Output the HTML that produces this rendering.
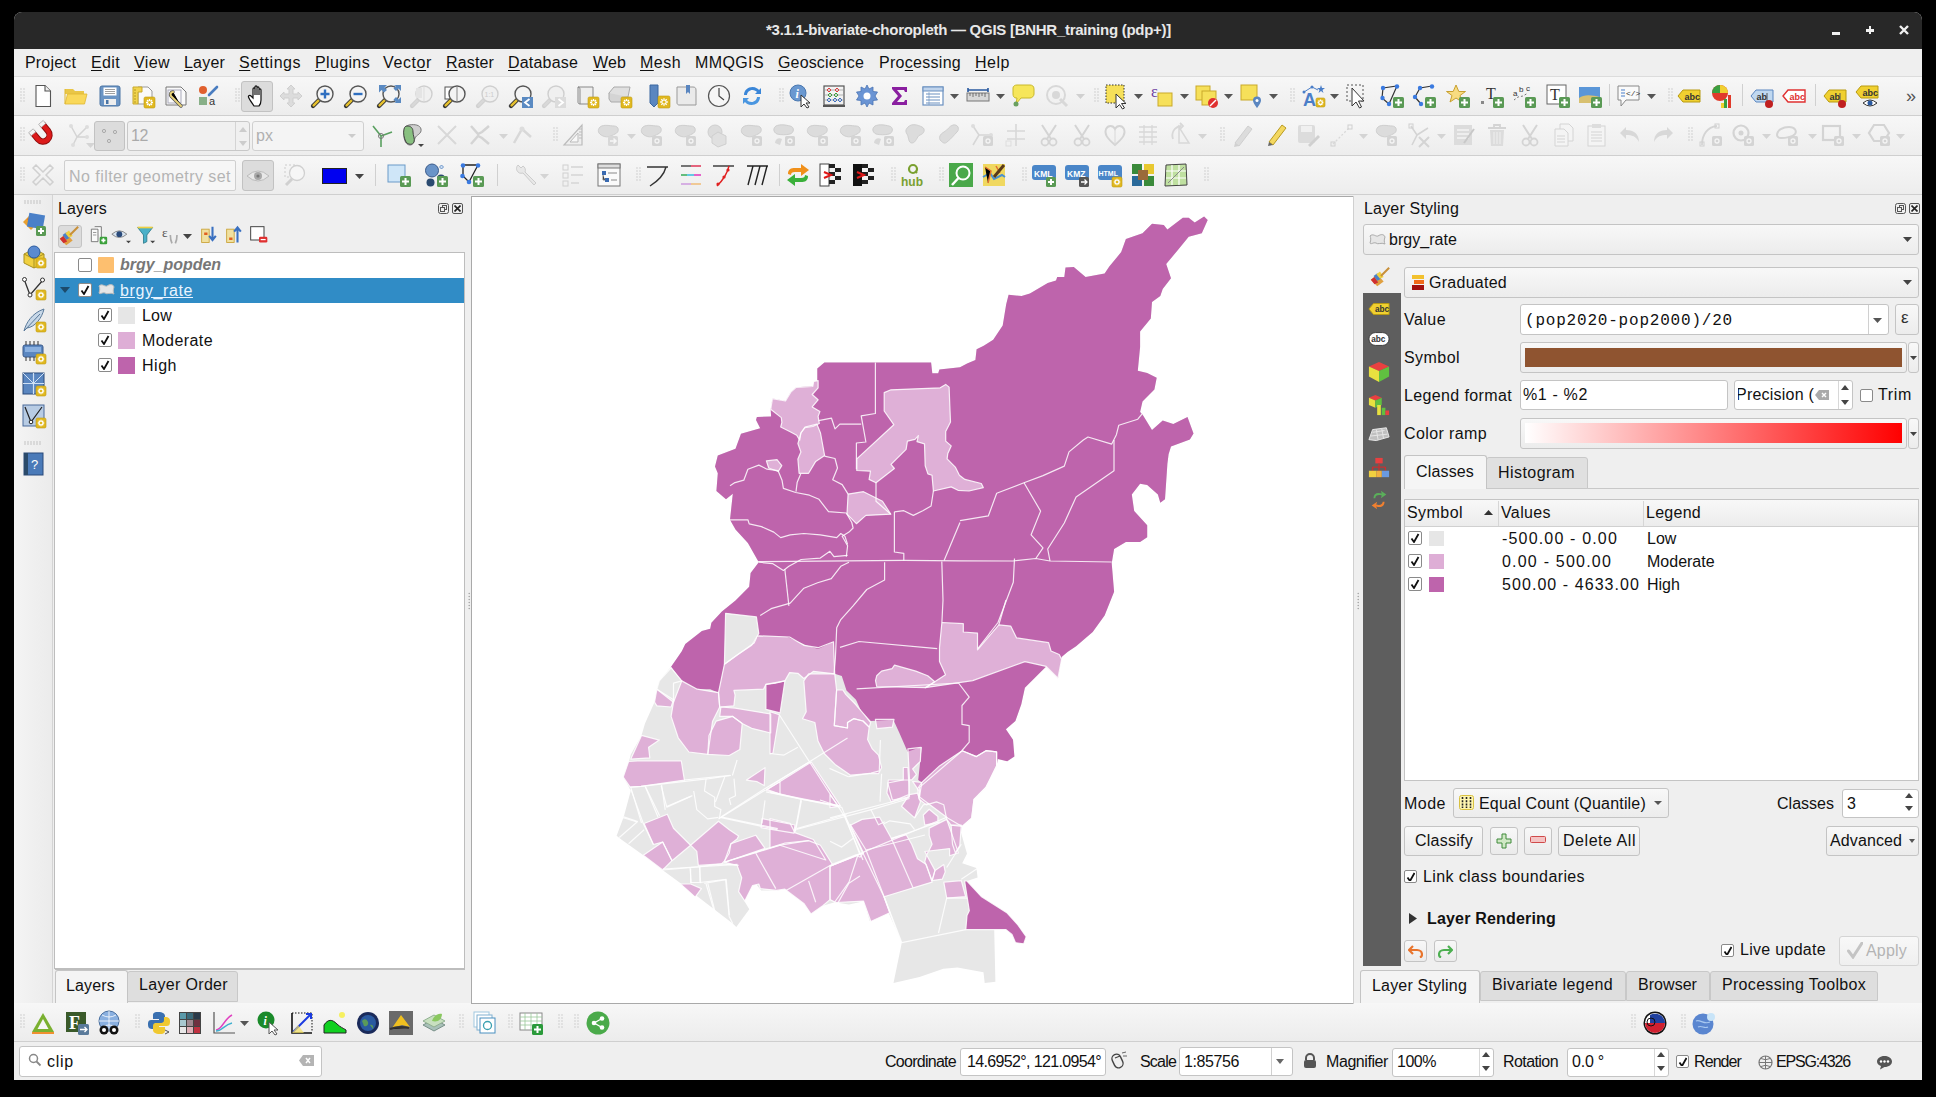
<!DOCTYPE html>
<html><head><meta charset="utf-8"><style>
html,body{margin:0;padding:0;background:#000;width:1936px;height:1097px;overflow:hidden}
#root{position:relative;width:1936px;height:1097px;overflow:hidden}
#root>div,#root>span{position:absolute;box-sizing:border-box}
#root>span{white-space:pre}

</style></head><body><div id="root">
<div style="left:14px;top:12px;width:1908px;height:1068px;background:#efefef;border-radius:8px 8px 0 0"></div>
<div style="left:14px;top:12px;width:1908px;height:37px;background:#282828;border-radius:8px 8px 0 0"></div>
<span style="left:766px;top:21.6px;font:bold 15px 'Liberation Sans';line-height:15px;color:#e8e8e8;letter-spacing:-0.271px;">*3.1.1-bivariate-choropleth — QGIS [BNHR_training (pdp+)]</span>
<div style="left:1832px;top:32px;width:8px;height:2.5px;background:#f0f0f0"></div>
<div style="left:1866px;top:29px;width:8px;height:2.5px;background:#f0f0f0"></div>
<div style="left:1868.8px;top:25.6px;width:2.5px;height:8.6px;background:#f0f0f0"></div>
<svg style="position:absolute;left:1899px;top:25px;" width="10" height="10" viewBox="0 0 10 10"><path d="M1 1L9 9M9 1L1 9" stroke="#f0f0f0" stroke-width="2.4"/></svg>
<div style="left:14px;top:49px;width:1908px;height:27px;background:#efefef"></div>
<span style="left:25px;top:54.9px;font:normal 16px 'Liberation Sans';line-height:16px;color:#111;letter-spacing:0.172px;">Pro<u style="text-underline-offset:2px">j</u>ect</span>
<span style="left:91px;top:54.9px;font:normal 16px 'Liberation Sans';line-height:16px;color:#111;letter-spacing:0.355px;"><u style="text-underline-offset:2px">E</u>dit</span>
<span style="left:134px;top:54.9px;font:normal 16px 'Liberation Sans';line-height:16px;color:#111;letter-spacing:0.402px;"><u style="text-underline-offset:2px">V</u>iew</span>
<span style="left:184px;top:54.9px;font:normal 16px 'Liberation Sans';line-height:16px;color:#111;letter-spacing:0.194px;"><u style="text-underline-offset:2px">L</u>ayer</span>
<span style="left:239px;top:54.9px;font:normal 16px 'Liberation Sans';line-height:16px;color:#111;letter-spacing:0.523px;"><u style="text-underline-offset:2px">S</u>ettings</span>
<span style="left:315px;top:54.9px;font:normal 16px 'Liberation Sans';line-height:16px;color:#111;letter-spacing:0.359px;"><u style="text-underline-offset:2px">P</u>lugins</span>
<span style="left:383px;top:54.9px;font:normal 16px 'Liberation Sans';line-height:16px;color:#111;letter-spacing:0.607px;">Vect<u style="text-underline-offset:2px">o</u>r</span>
<span style="left:446px;top:54.9px;font:normal 16px 'Liberation Sans';line-height:16px;color:#111;letter-spacing:0.146px;"><u style="text-underline-offset:2px">R</u>aster</span>
<span style="left:508px;top:54.9px;font:normal 16px 'Liberation Sans';line-height:16px;color:#111;letter-spacing:0.188px;"><u style="text-underline-offset:2px">D</u>atabase</span>
<span style="left:593px;top:54.9px;font:normal 16px 'Liberation Sans';line-height:16px;color:#111;letter-spacing:0.130px;"><u style="text-underline-offset:2px">W</u>eb</span>
<span style="left:640px;top:54.9px;font:normal 16px 'Liberation Sans';line-height:16px;color:#111;letter-spacing:0.469px;"><u style="text-underline-offset:2px">M</u>esh</span>
<span style="left:695px;top:54.9px;font:normal 16px 'Liberation Sans';line-height:16px;color:#111;letter-spacing:0.388px;">MMQGIS</span>
<span style="left:778px;top:54.9px;font:normal 16px 'Liberation Sans';line-height:16px;color:#111;letter-spacing:0.150px;"><u style="text-underline-offset:2px">G</u>eoscience</span>
<span style="left:879px;top:54.9px;font:normal 16px 'Liberation Sans';line-height:16px;color:#111;letter-spacing:0.284px;">Pro<u style="text-underline-offset:2px">c</u>essing</span>
<span style="left:975px;top:54.9px;font:normal 16px 'Liberation Sans';line-height:16px;color:#111;letter-spacing:0.523px;"><u style="text-underline-offset:2px">H</u>elp</span>
<div style="left:14px;top:76px;width:1908px;height:1px;background:#dcdcdc"></div>
<div style="left:14px;top:77px;width:1908px;height:38px;background:linear-gradient(#f7f7f7,#ededed)"></div>
<div style="left:14px;top:115px;width:1908px;height:1px;background:#cfcfcf"></div>
<div style="left:14px;top:116px;width:1908px;height:39px;background:linear-gradient(#f7f7f7,#ededed)"></div>
<div style="left:14px;top:155px;width:1908px;height:1px;background:#cfcfcf"></div>
<div style="left:14px;top:156px;width:1908px;height:38px;background:linear-gradient(#f7f7f7,#ededed)"></div>
<div style="left:14px;top:194px;width:1908px;height:1px;background:#cfcfcf"></div>
<div style="left:14px;top:195px;width:1908px;height:808px;background:#efefef"></div>
<div style="left:14px;top:195px;width:39px;height:808px;background:linear-gradient(90deg,#f4f4f4,#ebebeb)"></div>
<div style="left:52px;top:195px;width:1px;height:808px;background:#d4d4d4"></div>
<div style="left:14px;top:1003px;width:1908px;height:38px;background:linear-gradient(#f7f7f7,#ececec)"></div>
<div style="left:14px;top:1041px;width:1908px;height:1px;background:#cfcfcf"></div>
<div style="left:14px;top:1042px;width:1908px;height:38px;background:#efefef"></div>
<span style="left:58px;top:201.4px;font:normal 16px 'Liberation Sans';line-height:16px;color:#111;letter-spacing:0.161px;">Layers</span>
<svg style="position:absolute;left:438px;top:203px;" width="11" height="11" viewBox="0 0 11 11"><rect x="0.5" y="0.5" width="10" height="10" rx="2" fill="none" stroke="#555"/><rect x="4.5" y="2.5" width="4" height="4" fill="none" stroke="#555"/><rect x="2.5" y="4.5" width="4" height="4" fill="#efefef" stroke="#555"/></svg>
<div style="left:452px;top:203px;width:11px;height:11px;border:1px solid #555;border-radius:2px"></div>
<svg style="position:absolute;left:454px;top:205px;" width="7" height="7" viewBox="0 0 7 7"><path d="M0.5 0.5L6.5 6.5M6.5 0.5L0.5 6.5" stroke="#222" stroke-width="1.6"/></svg>
<div style="left:58px;top:225px;width:24px;height:23px;background:#dcdcdc;border:1px solid #c4c4c4;border-radius:3px"></div>
<div style="left:54px;top:252px;width:411px;height:717px;background:#fff;border:1px solid #bdbdbd"></div>
<div style="left:78px;top:258px;width:14px;height:14px;background:#fff;border:1px solid #8a8a8a;border-radius:2px"></div>
<div style="left:98px;top:257px;width:16px;height:16px;background:#fdbf6f;border-radius:1px"></div>
<span style="left:120px;top:256.9px;font:italic bold 16px 'Liberation Sans';line-height:16px;color:#777;letter-spacing:-0.031px;">brgy_popden</span>
<div style="left:55px;top:278px;width:409px;height:25px;background:#308cc6"></div>
<svg style="position:absolute;left:60px;top:287px;" width="10" height="6" viewBox="0 0 10 6"><path d="M0 0L10 0L5 6Z" fill="#1d4b6b"/></svg>
<div style="left:78px;top:283px;width:14px;height:14px;background:#fff;border:1px solid #8a8a8a;border-radius:2px"></div>
<svg style="position:absolute;left:80px;top:285px;" width="10" height="10" viewBox="0 0 10 10"><path d="M1.5 5.5L4 9L8.5 1" fill="none" stroke="#111" stroke-width="1.8"/></svg>
<svg style="position:absolute;left:98px;top:283px;" width="17" height="13" viewBox="0 0 17 13"><path d="M1 3C4 0 7 4 9 3C12 1 15 1 16 4C15 7 15 9 16 11C12 9 9 12 7 10C4 9 2 12 1 10C2 7 2 5 1 3Z" fill="#e6e6e6" stroke="#bbb"/></svg>
<span style="left:120px;top:282.9px;font:normal 16px 'Liberation Sans';line-height:16px;color:#e9f4ff;letter-spacing:0.601px;text-decoration:underline">brgy_rate</span>
<div style="left:98px;top:308px;width:14px;height:14px;background:#fff;border:1px solid #8a8a8a;border-radius:2px"></div>
<svg style="position:absolute;left:100px;top:310px;" width="10" height="10" viewBox="0 0 10 10"><path d="M1.5 5.5L4 9L8.5 1" fill="none" stroke="#111" stroke-width="1.8"/></svg>
<div style="left:118px;top:307px;width:17px;height:17px;background:#e6e6e6"></div>
<span style="left:142px;top:308.4px;font:normal 16px 'Liberation Sans';line-height:16px;color:#111;letter-spacing:0.214px;">Low</span>
<div style="left:98px;top:333px;width:14px;height:14px;background:#fff;border:1px solid #8a8a8a;border-radius:2px"></div>
<svg style="position:absolute;left:100px;top:335px;" width="10" height="10" viewBox="0 0 10 10"><path d="M1.5 5.5L4 9L8.5 1" fill="none" stroke="#111" stroke-width="1.8"/></svg>
<div style="left:118px;top:332px;width:17px;height:17px;background:#deaed6"></div>
<span style="left:142px;top:333.4px;font:normal 16px 'Liberation Sans';line-height:16px;color:#111;letter-spacing:0.426px;">Moderate</span>
<div style="left:98px;top:358px;width:14px;height:14px;background:#fff;border:1px solid #8a8a8a;border-radius:2px"></div>
<svg style="position:absolute;left:100px;top:360px;" width="10" height="10" viewBox="0 0 10 10"><path d="M1.5 5.5L4 9L8.5 1" fill="none" stroke="#111" stroke-width="1.8"/></svg>
<div style="left:118px;top:357px;width:17px;height:17px;background:#be64ac"></div>
<span style="left:142px;top:358.4px;font:normal 16px 'Liberation Sans';line-height:16px;color:#111;letter-spacing:0.523px;">High</span>
<div style="left:55px;top:969px;width:410px;height:1px;background:#bdbdbd"></div>
<div style="left:127px;top:971px;width:111px;height:31px;background:#dedede;border:1px solid #c8c8c8;border-radius:3px 3px 0 0"></div>
<div style="left:55px;top:970px;width:73px;height:33px;background:#f4f4f4;border:1px solid #c4c4c4;border-bottom:none;border-radius:3px 3px 0 0"></div>
<span style="left:66px;top:977.9px;font:normal 16px 'Liberation Sans';line-height:16px;color:#111;letter-spacing:0.161px;">Layers</span>
<span style="left:139px;top:976.9px;font:normal 16px 'Liberation Sans';line-height:16px;color:#111;letter-spacing:0.330px;">Layer Order</span>
<div style="left:471px;top:196px;width:883px;height:808px;background:#fff;border:1px solid #a9a9a9"></div>
<div style="left:1353px;top:196px;width:1px;height:808px;background:#d0d0d0"></div>
<span style="left:1364px;top:200.9px;font:normal 16px 'Liberation Sans';line-height:16px;color:#111;letter-spacing:0.192px;">Layer Styling</span>
<svg style="position:absolute;left:1895px;top:203px;" width="11" height="11" viewBox="0 0 11 11"><rect x="0.5" y="0.5" width="10" height="10" rx="2" fill="none" stroke="#555"/><rect x="4.5" y="2.5" width="4" height="4" fill="none" stroke="#555"/><rect x="2.5" y="4.5" width="4" height="4" fill="#efefef" stroke="#555"/></svg>
<div style="left:1909px;top:203px;width:11px;height:11px;border:1px solid #555;border-radius:2px"></div>
<svg style="position:absolute;left:1911px;top:205px;" width="7" height="7" viewBox="0 0 7 7"><path d="M0.5 0.5L6.5 6.5M6.5 0.5L0.5 6.5" stroke="#222" stroke-width="1.6"/></svg>
<div style="left:1363px;top:224px;width:556px;height:31px;background:linear-gradient(#f8f8f8,#ececec);border:1px solid #c4c4c4;border-radius:3px"></div>
<svg style="position:absolute;left:1369px;top:233px;" width="17" height="13" viewBox="0 0 17 13"><path d="M1 3C4 0 7 4 9 3C12 1 15 1 16 4C15 7 15 9 16 11C12 9 9 12 7 10C4 9 2 12 1 10C2 7 2 5 1 3Z" fill="#e6e6e6" stroke="#aaa"/></svg>
<span style="left:1389px;top:231.9px;font:normal 16px 'Liberation Sans';line-height:16px;color:#111;letter-spacing:0.045px;">brgy_rate</span>
<svg style="position:absolute;left:1903px;top:237px;" width="9" height="5" viewBox="0 0 9 5"><path d="M0 0H9L4.5 5Z" fill="#444"/></svg>
<div style="left:1363px;top:293px;width:38px;height:673px;background:#5e5e5e"></div>
<div style="left:1404px;top:267px;width:515px;height:31px;background:linear-gradient(#f8f8f8,#ececec);border:1px solid #c4c4c4;border-radius:3px"></div>
<svg style="position:absolute;left:1410px;top:274px;" width="15" height="17" viewBox="0 0 15 17"><rect x="2" y="1" width="12" height="4" fill="#f2c12e"/><rect x="4" y="6" width="10" height="4" fill="#f06a1a"/><rect x="2" y="11" width="12" height="5" fill="#a01010"/></svg>
<span style="left:1429px;top:274.9px;font:normal 16px 'Liberation Sans';line-height:16px;color:#111;letter-spacing:0.266px;">Graduated</span>
<svg style="position:absolute;left:1903px;top:280px;" width="9" height="5" viewBox="0 0 9 5"><path d="M0 0H9L4.5 5Z" fill="#444"/></svg>
<span style="left:1404px;top:311.9px;font:normal 16px 'Liberation Sans';line-height:16px;color:#111;letter-spacing:0.453px;">Value</span>
<span style="left:1404px;top:349.9px;font:normal 16px 'Liberation Sans';line-height:16px;color:#111;letter-spacing:0.440px;">Symbol</span>
<span style="left:1404px;top:387.9px;font:normal 16px 'Liberation Sans';line-height:16px;color:#111;letter-spacing:0.370px;">Legend format</span>
<span style="left:1404px;top:425.9px;font:normal 16px 'Liberation Sans';line-height:16px;color:#111;letter-spacing:0.386px;">Color ramp</span>
<div style="left:1520px;top:304px;width:369px;height:31px;background:#fff;border:1px solid #c4c4c4;border-radius:3px"></div>
<div style="left:1868px;top:305px;width:1px;height:29px;background:#d0d0d0"></div>
<svg style="position:absolute;left:1873px;top:318px;" width="9" height="5" viewBox="0 0 9 5"><path d="M0 0H9L4.5 5Z" fill="#555"/></svg>
<span style="left:1525px;top:312.9px;font:normal 16px 'Liberation Mono';line-height:16px;color:#111;letter-spacing:0.798px;">(pop2020-pop2000)/20</span>
<div style="left:1895px;top:304px;width:24px;height:31px;background:linear-gradient(#f8f8f8,#ececec);border:1px solid #c4c4c4;border-radius:3px"></div>
<span style="left:1901px;top:308.8px;font:normal 17px 'Liberation Sans';line-height:17px;color:#333;">ε</span>
<div style="left:1520px;top:342px;width:387px;height:31px;background:linear-gradient(#f8f8f8,#ececec);border:1px solid #c4c4c4;border-radius:3px"></div>
<div style="left:1525px;top:348px;width:377px;height:19px;background:#8f5430"></div>
<div style="left:1908px;top:342px;width:11px;height:31px;background:linear-gradient(#f8f8f8,#ececec);border:1px solid #c4c4c4;border-radius:3px"></div>
<svg style="position:absolute;left:1910px;top:356px;" width="7" height="4" viewBox="0 0 7 4"><path d="M0 0H7L3.5 4Z" fill="#444"/></svg>
<div style="left:1520px;top:380px;width:208px;height:30px;background:#fff;border:1px solid #c4c4c4;border-radius:3px"></div>
<span style="left:1523px;top:386.9px;font:normal 16px 'Liberation Sans';line-height:16px;color:#111;letter-spacing:0.647px;">%1 - %2</span>
<div style="left:1734px;top:380px;width:119px;height:30px;background:#fff;border:1px solid #c4c4c4;border-radius:3px"></div>
<span style="left:1736px;top:386.9px;font:normal 16px 'Liberation Sans';line-height:16px;color:#111;letter-spacing:0.220px;clip-path:inset(0 0 0 2px)">Precision (</span>
<svg style="position:absolute;left:1815px;top:390px;" width="14" height="10" viewBox="0 0 14 10"><path d="M4 0H14V10H4L0 5Z" fill="#aaa"/><path d="M7 3L11 7M11 3L7 7" stroke="#fff" stroke-width="1.4"/></svg>
<div style="left:1838px;top:381px;width:1px;height:28px;background:#d8d8d8"></div>
<svg style="position:absolute;left:1841px;top:385px;" width="8" height="5" viewBox="0 0 8 5"><path d="M0 5H8L4 0Z" fill="#444"/></svg>
<svg style="position:absolute;left:1841px;top:400px;" width="8" height="5" viewBox="0 0 8 5"><path d="M0 0H8L4 5Z" fill="#444"/></svg>
<div style="left:1860px;top:389px;width:13px;height:13px;background:#fff;border:1px solid #8a8a8a;border-radius:2px"></div>
<span style="left:1878px;top:386.9px;font:normal 16px 'Liberation Sans';line-height:16px;color:#111;letter-spacing:0.652px;">Trim</span>
<div style="left:1520px;top:418px;width:387px;height:31px;background:linear-gradient(#f8f8f8,#ececec);border:1px solid #c4c4c4;border-radius:3px"></div>
<div style="left:1525px;top:423px;width:377px;height:20px;background:linear-gradient(90deg,#fff,#ff0000)"></div>
<div style="left:1908px;top:418px;width:11px;height:31px;background:linear-gradient(#f8f8f8,#ececec);border:1px solid #c4c4c4;border-radius:3px"></div>
<svg style="position:absolute;left:1910px;top:432px;" width="7" height="4" viewBox="0 0 7 4"><path d="M0 0H7L3.5 4Z" fill="#444"/></svg>
<div style="left:1404px;top:488px;width:515px;height:293px;border-top:1px solid #c8c8c8"></div>
<div style="left:1486px;top:457px;width:102px;height:32px;background:#e0e0e0;border:1px solid #c8c8c8;border-radius:3px 3px 0 0"></div>
<div style="left:1404px;top:455px;width:83px;height:34px;background:#f5f5f5;border:1px solid #c4c4c4;border-bottom:none;border-radius:3px 3px 0 0"></div>
<span style="left:1416px;top:463.9px;font:normal 16px 'Liberation Sans';line-height:16px;color:#111;letter-spacing:0.156px;">Classes</span>
<span style="left:1498px;top:464.9px;font:normal 16px 'Liberation Sans';line-height:16px;color:#111;letter-spacing:0.455px;">Histogram</span>
<div style="left:1404px;top:499px;width:515px;height:282px;background:#fff;border:1px solid #c4c4c4"></div>
<div style="left:1405px;top:500px;width:513px;height:27px;background:linear-gradient(#f8f8f8,#ececec);border-bottom:1px solid #d0d0d0"></div>
<div style="left:1498px;top:501px;width:1px;height:25px;background:#d6d6d6"></div>
<div style="left:1643px;top:501px;width:1px;height:25px;background:#d6d6d6"></div>
<span style="left:1407px;top:504.9px;font:normal 16px 'Liberation Sans';line-height:16px;color:#111;letter-spacing:0.440px;">Symbol</span>
<svg style="position:absolute;left:1484px;top:510px;" width="9" height="5" viewBox="0 0 9 5"><path d="M0 5H9L4.5 0Z" fill="#333"/></svg>
<span style="left:1501px;top:504.9px;font:normal 16px 'Liberation Sans';line-height:16px;color:#111;letter-spacing:0.378px;">Values</span>
<span style="left:1646px;top:504.9px;font:normal 16px 'Liberation Sans';line-height:16px;color:#111;letter-spacing:0.268px;">Legend</span>
<div style="left:1408px;top:531px;width:14px;height:14px;background:#fff;border:1px solid #8a8a8a;border-radius:2px"></div>
<svg style="position:absolute;left:1410px;top:533px;" width="10" height="10" viewBox="0 0 10 10"><path d="M1.5 5.5L4 9L8.5 1" fill="none" stroke="#111" stroke-width="1.8"/></svg>
<div style="left:1429px;top:531px;width:15px;height:15px;background:#e6e6e6"></div>
<span style="left:1502px;top:530.9px;font:normal 16px 'Liberation Sans';line-height:16px;color:#111;letter-spacing:1.170px;">-500.00 - 0.00</span>
<span style="left:1647px;top:530.9px;font:normal 16px 'Liberation Sans';line-height:16px;color:#111;">Low</span>
<div style="left:1408px;top:554px;width:14px;height:14px;background:#fff;border:1px solid #8a8a8a;border-radius:2px"></div>
<svg style="position:absolute;left:1410px;top:556px;" width="10" height="10" viewBox="0 0 10 10"><path d="M1.5 5.5L4 9L8.5 1" fill="none" stroke="#111" stroke-width="1.8"/></svg>
<div style="left:1429px;top:554px;width:15px;height:15px;background:#deaed6"></div>
<span style="left:1502px;top:553.9px;font:normal 16px 'Liberation Sans';line-height:16px;color:#111;letter-spacing:1.208px;">0.00 - 500.00</span>
<span style="left:1647px;top:553.9px;font:normal 16px 'Liberation Sans';line-height:16px;color:#111;">Moderate</span>
<div style="left:1408px;top:577px;width:14px;height:14px;background:#fff;border:1px solid #8a8a8a;border-radius:2px"></div>
<svg style="position:absolute;left:1410px;top:579px;" width="10" height="10" viewBox="0 0 10 10"><path d="M1.5 5.5L4 9L8.5 1" fill="none" stroke="#111" stroke-width="1.8"/></svg>
<div style="left:1429px;top:577px;width:15px;height:15px;background:#be64ac"></div>
<span style="left:1502px;top:576.9px;font:normal 16px 'Liberation Sans';line-height:16px;color:#111;letter-spacing:1.062px;">500.00 - 4633.00</span>
<span style="left:1647px;top:576.9px;font:normal 16px 'Liberation Sans';line-height:16px;color:#111;">High</span>
<span style="left:1404px;top:795.9px;font:normal 16px 'Liberation Sans';line-height:16px;color:#111;letter-spacing:0.492px;">Mode</span>
<div style="left:1453px;top:788px;width:216px;height:30px;background:linear-gradient(#f8f8f8,#ececec);border:1px solid #c4c4c4;border-radius:3px"></div>
<svg style="position:absolute;left:1459px;top:795px;" width="15" height="15" viewBox="0 0 15 15"><rect x="0.5" y="0.5" width="14" height="14" rx="2" fill="#fff6b0" stroke="#d8c040"/><path d="M3.5 2V13M7.5 2V13M11.5 2V13" stroke="#222" stroke-dasharray="2 1.2" stroke-width="1.6"/></svg>
<span style="left:1479px;top:795.9px;font:normal 16px 'Liberation Sans';line-height:16px;color:#111;letter-spacing:0.192px;">Equal Count (Quantile)</span>
<svg style="position:absolute;left:1654px;top:801px;" width="8" height="4" viewBox="0 0 8 4"><path d="M0 0H8L4 4Z" fill="#555"/></svg>
<span style="left:1777px;top:795.9px;font:normal 16px 'Liberation Sans';line-height:16px;color:#111;letter-spacing:0.013px;">Classes</span>
<div style="left:1842px;top:789px;width:77px;height:29px;background:#fff;border:1px solid #c4c4c4;border-radius:3px"></div>
<span style="left:1847px;top:795.9px;font:normal 16px 'Liberation Sans';line-height:16px;color:#111;">3</span>
<svg style="position:absolute;left:1905px;top:793px;" width="8" height="5" viewBox="0 0 8 5"><path d="M0 5H8L4 0Z" fill="#444"/></svg>
<svg style="position:absolute;left:1905px;top:806px;" width="8" height="5" viewBox="0 0 8 5"><path d="M0 0H8L4 5Z" fill="#444"/></svg>
<div style="left:1404px;top:826px;width:79px;height:30px;background:linear-gradient(#f8f8f8,#ebebeb);border:1px solid #c4c4c4;border-radius:3px"></div>
<span style="left:1415px;top:832.9px;font:normal 16px 'Liberation Sans';line-height:16px;color:#111;letter-spacing:0.248px;">Classify</span>
<div style="left:1490px;top:827px;width:28px;height:28px;background:linear-gradient(#f8f8f8,#ebebeb);border:1px solid #c4c4c4;border-radius:3px"></div>
<svg style="position:absolute;left:1496px;top:833px;" width="16" height="16" viewBox="0 0 16 16"><path d="M6 1H10V6H15V10H10V15H6V10H1V6H6Z" fill="#cfe8c4" stroke="#3f8a3a" stroke-width="1"/></svg>
<div style="left:1524px;top:827px;width:28px;height:28px;background:linear-gradient(#f8f8f8,#ebebeb);border:1px solid #c4c4c4;border-radius:3px"></div>
<svg style="position:absolute;left:1530px;top:836px;" width="16" height="8" viewBox="0 0 16 8"><rect x="0.5" y="0.5" width="15" height="6" rx="1" fill="#f4c4c4" stroke="#d04a4a"/></svg>
<div style="left:1558px;top:826px;width:82px;height:30px;background:linear-gradient(#f8f8f8,#ebebeb);border:1px solid #c4c4c4;border-radius:3px"></div>
<span style="left:1563px;top:832.9px;font:normal 16px 'Liberation Sans';line-height:16px;color:#111;letter-spacing:0.541px;">Delete All</span>
<div style="left:1826px;top:826px;width:93px;height:30px;background:linear-gradient(#f8f8f8,#ebebeb);border:1px solid #c4c4c4;border-radius:3px"></div>
<span style="left:1830px;top:832.9px;font:normal 16px 'Liberation Sans';line-height:16px;color:#111;letter-spacing:0.104px;">Advanced</span>
<svg style="position:absolute;left:1909px;top:839px;" width="6" height="4" viewBox="0 0 6 4"><path d="M0 0H6L3 4Z" fill="#555"/></svg>
<div style="left:1404px;top:870px;width:13px;height:13px;background:#fff;border:1px solid #8a8a8a;border-radius:2px"></div>
<svg style="position:absolute;left:1406px;top:872px;" width="9" height="9" viewBox="0 0 9 9"><path d="M1.5 5.5L4 9L8.5 1" fill="none" stroke="#111" stroke-width="1.8"/></svg>
<span style="left:1423px;top:868.9px;font:normal 16px 'Liberation Sans';line-height:16px;color:#111;letter-spacing:0.387px;">Link class boundaries</span>
<svg style="position:absolute;left:1409px;top:913px;" width="8" height="11" viewBox="0 0 8 11"><path d="M0 0L8 5.5L0 11Z" fill="#333"/></svg>
<span style="left:1427px;top:910.9px;font:bold 16px 'Liberation Sans';line-height:16px;color:#111;letter-spacing:0.182px;">Layer Rendering</span>
<div style="left:1404px;top:940px;width:23px;height:22px;background:linear-gradient(#f8f8f8,#ebebeb);border:1px solid #c4c4c4;border-radius:3px"></div>
<div style="left:1434px;top:940px;width:23px;height:22px;background:linear-gradient(#f8f8f8,#ebebeb);border:1px solid #c4c4c4;border-radius:3px"></div>
<svg style="position:absolute;left:1408px;top:944px;" width="15" height="14" viewBox="0 0 15 14"><path d="M5 2L1 6L5 10M1.5 6H9C12 6 14 8 14 10.5C14 12 13 13 12 13.5" fill="none" stroke="#e8742c" stroke-width="2.2"/></svg>
<svg style="position:absolute;left:1438px;top:944px;" width="15" height="14" viewBox="0 0 15 14"><path d="M10 2L14 6L10 10M13.5 6H6C3 6 1 8 1 10.5C1 12 2 13 3 13.5" fill="none" stroke="#4caf50" stroke-width="2.2"/></svg>
<div style="left:1721px;top:944px;width:13px;height:13px;background:#fff;border:1px solid #8a8a8a;border-radius:2px"></div>
<svg style="position:absolute;left:1723px;top:946px;" width="9" height="9" viewBox="0 0 9 9"><path d="M1.5 5.5L4 9L8.5 1" fill="none" stroke="#111" stroke-width="1.8"/></svg>
<span style="left:1740px;top:942.4px;font:normal 16px 'Liberation Sans';line-height:16px;color:#111;letter-spacing:0.297px;">Live update</span>
<div style="left:1839px;top:936px;width:80px;height:30px;background:linear-gradient(#f8f8f8,#efefef);border:1px solid #d4d4d4;border-radius:3px"></div>
<svg style="position:absolute;left:1847px;top:942px;" width="16" height="17" viewBox="0 0 16 17"><path d="M1.5 9L6 15L15 1" fill="none" stroke="#c4c4c4" stroke-width="3" stroke-linecap="round"/></svg>
<span style="left:1866px;top:942.9px;font:normal 16px 'Liberation Sans';line-height:16px;color:#b4b4b4;letter-spacing:0.194px;">Apply</span>
<div style="left:1480px;top:971px;width:146px;height:30px;background:#dedede;border:1px solid #c8c8c8;border-radius:3px 3px 0 0"></div>
<div style="left:1626px;top:971px;width:84px;height:30px;background:#dedede;border:1px solid #c8c8c8;border-radius:3px 3px 0 0"></div>
<div style="left:1710px;top:971px;width:168px;height:30px;background:#dedede;border:1px solid #c8c8c8;border-radius:3px 3px 0 0"></div>
<div style="left:1360px;top:970px;width:120px;height:33px;background:#f4f4f4;border:1px solid #c4c4c4;border-bottom:none;border-radius:3px 3px 0 0"></div>
<span style="left:1372px;top:977.9px;font:normal 16px 'Liberation Sans';line-height:16px;color:#111;letter-spacing:0.192px;">Layer Styling</span>
<span style="left:1492px;top:976.9px;font:normal 16px 'Liberation Sans';line-height:16px;color:#111;letter-spacing:0.391px;">Bivariate legend</span>
<span style="left:1638px;top:976.9px;font:normal 16px 'Liberation Sans';line-height:16px;color:#111;letter-spacing:0.045px;">Browser</span>
<span style="left:1722px;top:976.9px;font:normal 16px 'Liberation Sans';line-height:16px;color:#111;letter-spacing:0.308px;">Processing Toolbox</span>
<div style="left:19px;top:1046px;width:303px;height:31px;background:#fff;border:1px solid #c4c4c4;border-radius:3px"></div>
<svg style="position:absolute;left:28px;top:1053px;" width="14" height="14" viewBox="0 0 14 14"><circle cx="5.5" cy="5.5" r="4" fill="none" stroke="#888" stroke-width="1.5"/><path d="M8.5 8.5L12.5 12.5" stroke="#888" stroke-width="1.8"/></svg>
<span style="left:47px;top:1053.9px;font:normal 16px 'Liberation Sans';line-height:16px;color:#111;letter-spacing:0.746px;">clip</span>
<svg style="position:absolute;left:299px;top:1055px;" width="15" height="11" viewBox="0 0 15 11"><path d="M4 0H15V11H4L0 5.5Z" fill="#b4b4b4"/><path d="M7 3L11 8M11 3L7 8" stroke="#fff" stroke-width="1.5"/></svg>
<span style="left:885px;top:1053.9px;font:normal 16px 'Liberation Sans';line-height:16px;color:#111;letter-spacing:-0.728px;">Coordinate</span>
<div style="left:960px;top:1048px;width:146px;height:28px;background:#fff;border:1px solid #c4c4c4;border-radius:3px"></div>
<span style="left:967px;top:1053.9px;font:normal 16px 'Liberation Sans';line-height:16px;color:#111;letter-spacing:-0.646px;">14.6952°, 121.0954°</span>
<svg style="position:absolute;left:1110px;top:1051px;" width="18" height="20" viewBox="0 0 18 20"><rect x="3" y="3" width="9" height="14" rx="4.5" fill="none" stroke="#444" stroke-width="1.4" transform="rotate(-25 7.5 10)"/><path d="M5 7L10 5" stroke="#444" stroke-width="1.2"/><path d="M12 2L16 1M13 5L17 5" stroke="#666" stroke-width="1"/></svg>
<span style="left:1140px;top:1053.9px;font:normal 16px 'Liberation Sans';line-height:16px;color:#111;letter-spacing:-0.806px;">Scale</span>
<div style="left:1179px;top:1047px;width:114px;height:29px;background:#fff;border:1px solid #c4c4c4;border-radius:3px"></div>
<div style="left:1271px;top:1048px;width:1px;height:27px;background:#d0d0d0"></div>
<svg style="position:absolute;left:1276px;top:1059px;" width="8" height="5" viewBox="0 0 8 5"><path d="M0 0H8L4 5Z" fill="#666"/></svg>
<span style="left:1184px;top:1053.9px;font:normal 16px 'Liberation Sans';line-height:16px;color:#111;letter-spacing:-0.406px;">1:85756</span>
<svg style="position:absolute;left:1303px;top:1053px;" width="14" height="16" viewBox="0 0 14 16"><path d="M3 7V5A4 4 0 0 1 11 5V7" fill="none" stroke="#555" stroke-width="2"/><rect x="1" y="7" width="12" height="8" rx="2" fill="#555"/></svg>
<span style="left:1326px;top:1053.9px;font:normal 16px 'Liberation Sans';line-height:16px;color:#111;letter-spacing:-0.424px;">Magnifier</span>
<div style="left:1392px;top:1048px;width:102px;height:29px;background:#fff;border:1px solid #c4c4c4;border-radius:3px"></div>
<div style="left:1479px;top:1049px;width:1px;height:27px;background:#d8d8d8"></div>
<svg style="position:absolute;left:1482px;top:1052px;" width="8" height="5" viewBox="0 0 8 5"><path d="M0 5H8L4 0Z" fill="#444"/></svg>
<svg style="position:absolute;left:1482px;top:1066px;" width="8" height="5" viewBox="0 0 8 5"><path d="M0 0H8L4 5Z" fill="#444"/></svg>
<span style="left:1397px;top:1053.9px;font:normal 16px 'Liberation Sans';line-height:16px;color:#111;letter-spacing:-0.480px;">100%</span>
<span style="left:1503px;top:1053.9px;font:normal 16px 'Liberation Sans';line-height:16px;color:#111;letter-spacing:-0.574px;">Rotation</span>
<div style="left:1567px;top:1048px;width:102px;height:29px;background:#fff;border:1px solid #c4c4c4;border-radius:3px"></div>
<div style="left:1654px;top:1049px;width:1px;height:27px;background:#d8d8d8"></div>
<svg style="position:absolute;left:1657px;top:1052px;" width="8" height="5" viewBox="0 0 8 5"><path d="M0 5H8L4 0Z" fill="#444"/></svg>
<svg style="position:absolute;left:1657px;top:1066px;" width="8" height="5" viewBox="0 0 8 5"><path d="M0 0H8L4 5Z" fill="#444"/></svg>
<span style="left:1572px;top:1053.9px;font:normal 16px 'Liberation Sans';line-height:16px;color:#111;letter-spacing:-0.219px;">0.0 °</span>
<div style="left:1676px;top:1055px;width:13px;height:13px;background:#fff;border:1px solid #8a8a8a;border-radius:2px"></div>
<svg style="position:absolute;left:1678px;top:1057px;" width="9" height="9" viewBox="0 0 9 9"><path d="M1.5 5.5L4 9L8.5 1" fill="none" stroke="#111" stroke-width="1.8"/></svg>
<span style="left:1694px;top:1053.9px;font:normal 16px 'Liberation Sans';line-height:16px;color:#111;letter-spacing:-0.914px;">Render</span>
<svg style="position:absolute;left:1758px;top:1055px;" width="15" height="15" viewBox="0 0 15 15"><circle cx="7.5" cy="7.5" r="6.5" fill="none" stroke="#777" stroke-width="1.2"/><path d="M1 7.5H14M7.5 1V14M3 3.5Q7.5 6 12 3.5M3 11.5Q7.5 9 12 11.5" fill="none" stroke="#777" stroke-width="1"/></svg>
<span style="left:1776px;top:1053.9px;font:normal 16px 'Liberation Sans';line-height:16px;color:#111;letter-spacing:-1.167px;">EPSG:4326</span>
<svg style="position:absolute;left:1876px;top:1055px;" width="17" height="15" viewBox="0 0 17 15"><path d="M8.5 1C13 1 16 3.5 16 6.5S13 12 8.5 12L4 14.5L5 11C2.5 10 1 8.5 1 6.5C1 3.5 4 1 8.5 1Z" fill="#555"/><circle cx="5" cy="6.5" r="1.2" fill="#fff"/><circle cx="8.5" cy="6.5" r="1.2" fill="#fff"/><circle cx="12" cy="6.5" r="1.2" fill="#fff"/></svg>
<svg style="position:absolute;left:472px;top:197px;" width="881" height="806" viewBox="0 0 881 806"><g transform="translate(-472,-197)"><polygon points="812.6,386.2 817.3,381.5 817.3,368.4 824.4,362.5 865.9,362.5 876.6,362.5 931.1,362.5 932.3,373.2 938.2,373.2 939.4,369.6 960.0,367.3 967.1,363.5 975.4,360.0 976.6,349.3 983.7,345.8 993.2,339.8 1002.7,325.6 1006.2,304.3 1008.6,294.8 1021.6,296.0 1029.9,293.6 1047.7,283.0 1056.0,280.6 1057.2,277.0 1064.3,277.0 1065.5,267.6 1073.8,267.0 1085.6,277.0 1104.6,273.5 1109.3,266.4 1121.2,252.1 1125.9,239.1 1142.5,233.2 1152.0,223.7 1163.8,224.9 1167.4,229.6 1182.8,217.8 1188.7,217.8 1194.7,222.5 1204.1,216.6 1207.7,220.1 1201.8,233.2 1188.7,236.7 1178.1,249.8 1166.2,264.0 1171.0,278.2 1162.7,288.9 1160.3,296.0 1152.0,301.9 1150.8,318.5 1140.1,331.5 1140.1,347.0 1137.8,370.7 1147.2,373.0 1156.7,377.8 1154.4,389.6 1142.5,401.5 1140.1,412.1 1142.5,414.5 1152.0,429.9 1162.7,420.4 1173.3,424.0 1187.5,416.9 1193.5,433.5 1189.9,439.4 1171.0,446.5 1168.6,454.2 1167.4,463.7 1165.0,499.3 1160.3,502.8 1157.9,494.5 1147.2,485.0 1140.1,483.8 1131.8,494.5 1134.2,511.1 1147.2,525.3 1147.2,537.2 1140.1,541.9 1125.9,541.9 1114.1,549.0 1111.7,563.2 1114.1,591.7 1104.6,615.4 1092.7,632.0 1076.1,646.2 1067.5,652.1 1061.6,656.9 1058.0,678.2 1046.2,666.4 1024.9,687.7 1021.3,704.3 1015.4,720.9 1005.9,729.2 1013.0,739.8 1014.4,756.6 1007.2,761.3 997.8,759.0 996.6,766.0 990.7,777.9 985.9,787.4 974.0,799.3 971.7,818.2 962.2,826.5 961.0,832.4 967.0,853.8 962.2,863.3 976.4,868.0 977.6,877.5 967.0,881.0 981.2,896.4 1007.2,913.0 1017.9,924.9 1026.2,936.7 1023.8,943.8 1015.5,942.7 1012.0,934.4 1006.0,929.6 994.2,929.6 995.4,981.8 984.7,983.0 983.5,972.3 957.5,967.5 943.3,968.7 919.5,977.0 893.5,983.0 901.8,942.7 888.7,913.0 884.0,896.4 869.8,921.3 863.8,901.2 848.9,904.6 834.7,902.2 822.8,905.8 811.0,914.1 803.8,903.4 784.9,889.2 776.6,890.4 761.2,890.4 756.4,884.4 750.5,885.6 741.0,895.1 745.8,903.4 749.3,909.3 736.3,927.1 732.7,923.5 697.2,896.3 680.6,883.3 662.8,870.2 642.7,854.8 621.3,839.4 616.6,835.8 623.7,816.9 630.8,790.8 628.4,786.1 623.7,777.8 628.4,763.8 630.8,754.4 641.5,735.4 645.0,723.5 654.5,702.2 656.9,689.2 659.3,680.9 671.1,666.7 681.8,651.3 685.3,644.1 701.9,631.1 710.2,628.7 711.4,622.8 721.9,611.4 735.5,600.5 749.2,586.8 750.6,573.1 758.8,562.2 747.9,543.0 735.5,529.4 730.0,519.8 732.8,493.8 726.0,499.3 716.4,491.1 717.8,473.3 715.0,466.5 717.8,455.5 735.5,448.7 741.0,433.7 760.2,428.2 756.0,420.0 756.9,417.0 771.1,416.5 770.7,409.3 772.4,398.6 785.5,401.0 790.8,392.1 796.2,387.3" fill="#e7e7e7"/><polygon points="724.4,664.3 737.5,654.8 754.1,643.0 757.6,635.8 789.6,637.0 803.8,645.3 818.1,647.7 833.5,641.8 834.7,673.8 813.3,671.4 803.8,678.5 797.9,673.3 789.6,672.6 784.9,680.9 765.9,684.4 763.5,689.2 733.9,690.4 735.1,695.1 733.9,705.8 719.7,707.0 718.5,692.7" fill="#dfb0d7"/><polygon points="673.5,683.2 681.8,680.9 697.2,689.2 718.5,692.7 719.7,707.0 712.6,721.2 707.8,754.4 688.9,752.0 678.2,737.8 671.1,716.4 673.5,702.2" fill="#dfb0d7"/><polygon points="656.9,689.2 673.5,699.8 671.1,707.0 656.9,705.8 654.5,702.2" fill="#dfb0d7"/><polygon points="716.1,721.2 732.7,716.4 742.2,723.5 739.8,749.6 729.2,755.5 707.8,754.4 709.0,735.4" fill="#dfb0d7"/><polygon points="720.9,707.0 735.1,708.1 770.7,714.0 770.7,733.0 751.7,728.3 742.2,723.5 732.7,716.4 719.7,716.4" fill="#dfb0d7"/><polygon points="803.8,680.9 808.6,673.8 834.7,673.8 836.6,690.0 834.3,725.6 847.5,728.0 847.5,722.5 853.7,718.7 863.0,721.0 869.2,727.2 867.6,739.6 872.3,748.9 878.5,755.1 881.6,767.5 878.5,773.7 869.2,773.7 850.6,775.2 835.1,764.4 824.2,753.5 818.0,741.1 814.9,722.5 802.5,718.7 806.2,711.7" fill="#dfb0d7"/><polygon points="836.6,690.0 842.8,690.0 845.9,694.6 855.2,704.0 859.1,708.6 864.5,714.8 870.7,722.5 869.2,727.2 863.0,721.0 853.7,718.7 847.5,722.5 847.5,728.0 834.3,725.6" fill="#dfb0d7"/><polygon points="875.4,719.4 894.0,719.4 892.4,727.2 876.9,728.7" fill="#dfb0d7"/><polygon points="887.8,783.0 903.3,779.9 903.3,767.5 907.9,767.5 909.5,796.9 892.4,800.0" fill="#dfb0d7"/><polygon points="907.9,748.9 921.1,747.3 920.3,761.3 912.6,769.0 916.4,774.5 911.8,779.9 909.5,779.9" fill="#dfb0d7"/><polygon points="770.0,711.7 779.3,714.8 773.0,753.0 770.0,754.0" fill="#dfb0d7"/><polygon points="641.5,735.4 659.3,740.1 648.6,747.3 649.8,757.9 630.8,759.1" fill="#dfb0d7"/><polygon points="623.2,777.0 628.6,761.5 637.9,760.8 681.3,760.8 684.4,780.1 641.0,786.3 630.1,787.1" fill="#dfb0d7"/><polygon points="746.4,780.1 765.0,767.7 764.2,785.6 757.2,781.7" fill="#dfb0d7"/><polygon points="765.7,790.4 811.3,762.1 840.4,805.9 801.0,799.2" fill="#dfb0d7"/><polygon points="766.5,789.4 780.0,781.7 780.0,794.1" fill="#dfb0d7"/><polygon points="644.1,823.5 667.3,814.2 673.5,828.2 690.6,845.2 672.0,860.7 662.7,842.1 653.4,844.5" fill="#dfb0d7"/><polygon points="643.3,855.3 662.7,842.1 672.0,860.7 662.7,870.0" fill="#dfb0d7"/><polygon points="690.6,845.2 718.5,821.2 729.3,829.7 738.6,835.9 737.1,839.0 730.9,843.7 729.3,853.0 724.7,860.7 721.6,863.8 698.3,865.4 696.8,851.4" fill="#dfb0d7"/><polygon points="724.7,860.7 730.9,843.7 755.7,835.2 765.0,848.3 724.7,862.3" fill="#dfb0d7"/><polygon points="762.0,818.6 794.9,825.0 794.0,833.2 761.1,827.7" fill="#dfb0d7"/><polygon points="724.7,862.3 780.0,845.2 808.6,840.6 820.4,845.3 832.3,864.3 856.0,854.8 860.0,857.2 863.5,852.9 830.0,866.1 830.0,899.6 822.8,905.8 811.0,914.1 803.8,903.4 784.9,889.2 776.6,890.4 760.3,888.6 758.8,884.0 752.6,885.5 744.8,901.0 738.6,891.7 741.7,877.8 737.1,865.4" fill="#dfb0d7"/><polygon points="680.5,884.0 690.6,884.0 701.4,888.6 695.2,897.1" fill="#dfb0d7"/><polygon points="770.0,818.6 790.1,823.3 794.8,832.6 813.4,839.5 825.8,860.0 780.0,845.2 770.0,848.0" fill="#dfb0d7"/><polygon points="850.4,825.2 862.1,819.4 879.6,817.2 891.3,838.3 905.8,834.0 911.7,844.2 917.5,858.8 926.3,864.6 932.1,882.1 884.0,896.7 889.8,912.7 870.8,921.5 863.5,901.1 835.8,902.5 830.0,899.6 830.0,866.1 863.5,852.9" fill="#dfb0d7"/><polygon points="929.2,828.1 946.7,819.4 958.4,852.9 949.6,855.8 949.6,848.6 924.8,851.5 935.0,870.4 932.1,880.6 924.8,861.7 926.3,855.8 932.1,844.2 929.2,835.4" fill="#dfb0d7"/><polygon points="962.2,750.7 976.4,756.6 986.0,750.7 996.6,751.9 996.6,766.0 990.7,777.9 985.9,787.4 974.0,799.3 971.7,818.2 962.2,826.5 951.1,825.2 946.7,819.4 943.8,804.8 936.5,801.9 926.3,804.8 919.0,799.0 917.5,788.8 921.8,782.5 939.5,765.9" fill="#dfb0d7"/><polygon points="888.3,780.0 909.5,780.0 908.8,794.6 891.3,801.9 886.9,793.1" fill="#dfb0d7"/><polygon points="909.5,794.6 917.5,793.1 920.4,801.9 914.6,817.9 901.5,806.3" fill="#dfb0d7"/><polygon points="923.3,815.0 929.2,809.2 937.9,816.5 937.9,822.3 924.8,825.2" fill="#dfb0d7"/><polygon points="951.1,825.2 961.3,825.2 959.8,845.6 955.4,852.9 952.5,844.2" fill="#dfb0d7"/><polygon points="943.8,882.1 961.3,880.6 965.6,896.7 946.7,898.1" fill="#dfb0d7"/><polygon points="932.1,880.6 935.0,870.4 943.8,864.6 945.2,871.9 942.3,879.2" fill="#dfb0d7"/><polygon points="830.0,794.6 838.8,806.3 830.0,807.7" fill="#dfb0d7"/><polygon points="912.6,781.4 921.8,782.5 919.5,796.9 918.8,790.7" fill="#dfb0d7"/><polygon points="671.1,666.7 681.8,651.3 685.3,644.1 701.9,631.1 710.2,628.7 711.4,622.8 721.9,611.4 735.5,600.5 749.2,586.8 750.6,573.1 758.8,562.2 747.9,543.0 735.5,529.4 730.0,519.8 732.8,493.8 726.0,499.3 716.4,491.1 717.8,473.3 715.0,466.5 717.8,455.5 735.5,448.7 741.0,433.7 760.2,428.2 756.0,420.0 756.9,417.0 771.1,416.5 770.7,409.3 772.4,398.6 785.5,401.0 790.8,392.1 796.2,387.3 812.6,386.2 817.3,381.5 817.3,368.4 824.4,362.5 865.9,362.5 876.6,362.5 931.1,362.5 932.3,373.2 938.2,373.2 939.4,369.6 960.0,367.3 967.1,363.5 975.4,360.0 976.6,349.3 983.7,345.8 993.2,339.8 1002.7,325.6 1006.2,304.3 1008.6,294.8 1021.6,296.0 1029.9,293.6 1047.7,283.0 1056.0,280.6 1057.2,277.0 1064.3,277.0 1065.5,267.6 1073.8,267.0 1085.6,277.0 1104.6,273.5 1109.3,266.4 1121.2,252.1 1125.9,239.1 1142.5,233.2 1152.0,223.7 1163.8,224.9 1167.4,229.6 1182.8,217.8 1188.7,217.8 1194.7,222.5 1204.1,216.6 1207.7,220.1 1201.8,233.2 1188.7,236.7 1178.1,249.8 1166.2,264.0 1171.0,278.2 1162.7,288.9 1160.3,296.0 1152.0,301.9 1150.8,318.5 1140.1,331.5 1140.1,347.0 1137.8,370.7 1147.2,373.0 1156.7,377.8 1154.4,389.6 1142.5,401.5 1140.1,412.1 1142.5,414.5 1152.0,429.9 1162.7,420.4 1173.3,424.0 1187.5,416.9 1193.5,433.5 1189.9,439.4 1171.0,446.5 1168.6,454.2 1167.4,463.7 1165.0,499.3 1160.3,502.8 1157.9,494.5 1147.2,485.0 1140.1,483.8 1131.8,494.5 1134.2,511.1 1147.2,525.3 1147.2,537.2 1140.1,541.9 1125.9,541.9 1114.1,549.0 1111.7,563.2 1114.1,591.7 1104.6,615.4 1092.7,632.0 1076.1,646.2 1067.5,652.1 1061.6,656.9 1058.0,678.2 1046.2,666.4 1024.9,687.7 1021.3,704.3 1015.4,720.9 1005.9,729.2 1013.0,739.8 1014.4,756.6 1007.2,761.3 997.8,759.0 996.6,766.0 996.6,751.9 986.0,750.7 976.4,756.6 962.2,750.7 939.5,765.9 921.8,782.5 918.2,780.1 921.8,747.0 918.2,748.1 907.6,751.7 899.3,732.7 893.3,719.7 870.8,720.9 861.3,711.4 856.0,699.8 846.5,690.4 841.8,676.1 834.7,673.8 833.5,641.8 818.0,648.9 806.2,645.3 787.2,637.0 758.8,635.8 751.7,645.3 737.5,654.8 724.4,664.3 718.5,692.7 710.2,689.2 697.2,689.2 681.8,680.9" fill="#be64ac"/><polygon points="770.7,409.3 772.4,398.6 785.5,401.0 790.8,392.1 796.2,387.3 812.8,386.5 813.6,381.4 818.1,380.6 818.1,387.9 812.2,394.5 818.1,399.8 812.2,406.9 819.9,411.6 818.1,416.4 819.3,423.5 812.8,426.5 805.0,427.6 800.9,433.0 799.7,440.1 796.7,435.3 790.2,431.8 780.7,427.0 781.9,422.3 781.3,417.6" fill="#dfb0d7"/><polygon points="800.9,433.0 805.0,427.0 816.9,424.1 820.5,433.0 824.6,455.5 815.7,461.4 808.6,473.3 799.1,473.3 797.9,459.1 800.9,452.0 797.9,443.6" fill="#dfb0d7"/><polygon points="884.2,392.6 891.0,389.8 940.2,387.8 945.7,384.4 949.1,387.1 949.8,405.6 950.5,422.0 945.7,431.5 945.7,441.1 951.2,445.9 947.8,453.4 947.1,458.9 955.3,467.1 959.4,475.3 964.9,479.4 981.3,483.5 983.3,487.6 969.0,491.0 958.0,490.3 951.2,486.9 933.4,491.0 932.0,475.3 927.9,473.9 925.2,465.7 924.5,443.8 917.0,441.7 918.4,435.6 915.0,439.4 907.4,441.1 906.1,449.3 891.0,464.4 894.4,468.5 876.0,482.8 869.1,479.4 870.5,471.2 856.8,470.5 856.8,458.9 893.8,424.7 884.2,411.0" fill="#dfb0d7"/><polygon points="848.1,494.1 863.5,491.7 882.5,501.2 890.8,514.2 865.9,515.4 856.4,523.7 847.0,514.2" fill="#dfb0d7"/><polygon points="766.4,460.9 777.0,459.7 781.8,465.6 778.2,471.5 768.7,468.0" fill="#dfb0d7"/><polygon points="941.9,622.5 963.3,623.7 963.3,632.0 977.5,633.2 977.5,649.8 998.8,624.9 1010.7,626.1 1016.6,637.9 1048.6,642.7 1051.0,651.0 1059.2,654.5 1061.6,659.3 1058.0,678.2 1046.2,666.4 1024.9,661.6 972.7,680.6 925.3,687.7 934.8,681.8 945.5,674.7 939.5,661.6 939.5,647.4" fill="#dfb0d7"/><polygon points="876.7,675.8 881.5,671.1 892.1,668.7 894.5,665.2 915.8,671.1 927.7,675.8 934.8,681.8 925.3,687.7 876.7,686.5 875.5,680.6" fill="#dfb0d7"/><polygon points="962.2,750.7 976.4,756.6 986.0,750.7 996.6,751.9 996.6,766.0 990.7,777.9 985.9,787.4 974.0,799.3 971.7,818.2 962.2,826.5 948.0,818.2 919.5,796.9 919.5,787.4" fill="#dfb0d7"/><polygon points="725.6,613.3 756.4,616.9 758.8,633.5 751.7,645.3 737.5,654.8 724.4,664.3" fill="#e7e7e7"/><polygon points="659.3,680.9 671.1,667.8 681.8,680.9 673.5,702.2 656.9,689.2" fill="#e7e7e7"/><polygon points="964.6,881.0 967.0,881.0 981.2,896.4 1007.2,913.0 1017.9,924.9 1026.2,936.7 1023.8,943.8 1015.5,942.7 1012.0,934.4 1006.0,929.6 965.8,929.6 967.0,915.4 969.3,910.7" fill="#be64ac"/><polygon points="765.9,684.4 775.4,683.2 784.9,680.9 780.1,712.9 765.9,709.3" fill="#be64ac"/><g fill="none" stroke="#fff" stroke-opacity="0.85" stroke-width="1.2" stroke-linejoin="round"><polygon points="770.7,409.3 772.4,398.6 785.5,401.0 790.8,392.1 796.2,387.3 812.8,386.5 813.6,381.4 818.1,380.6 818.1,387.9 812.2,394.5 818.1,399.8 812.2,406.9 819.9,411.6 818.1,416.4 819.3,423.5 812.8,426.5 805.0,427.6 800.9,433.0 799.7,440.1 796.7,435.3 790.2,431.8 780.7,427.0 781.9,422.3 781.3,417.6"/><polygon points="800.9,433.0 805.0,427.0 816.9,424.1 820.5,433.0 824.6,455.5 815.7,461.4 808.6,473.3 799.1,473.3 797.9,459.1 800.9,452.0 797.9,443.6"/><polygon points="884.2,392.6 891.0,389.8 940.2,387.8 945.7,384.4 949.1,387.1 949.8,405.6 950.5,422.0 945.7,431.5 945.7,441.1 951.2,445.9 947.8,453.4 947.1,458.9 955.3,467.1 959.4,475.3 964.9,479.4 981.3,483.5 983.3,487.6 969.0,491.0 958.0,490.3 951.2,486.9 933.4,491.0 932.0,475.3 927.9,473.9 925.2,465.7 924.5,443.8 917.0,441.7 918.4,435.6 915.0,439.4 907.4,441.1 906.1,449.3 891.0,464.4 894.4,468.5 876.0,482.8 869.1,479.4 870.5,471.2 856.8,470.5 856.8,458.9 893.8,424.7 884.2,411.0"/><polygon points="848.1,494.1 863.5,491.7 882.5,501.2 890.8,514.2 865.9,515.4 856.4,523.7 847.0,514.2"/><polygon points="766.4,460.9 777.0,459.7 781.8,465.6 778.2,471.5 768.7,468.0"/><polygon points="941.9,622.5 963.3,623.7 963.3,632.0 977.5,633.2 977.5,649.8 998.8,624.9 1010.7,626.1 1016.6,637.9 1048.6,642.7 1051.0,651.0 1059.2,654.5 1061.6,659.3 1058.0,678.2 1046.2,666.4 1024.9,661.6 972.7,680.6 925.3,687.7 934.8,681.8 945.5,674.7 939.5,661.6 939.5,647.4"/><polygon points="876.7,675.8 881.5,671.1 892.1,668.7 894.5,665.2 915.8,671.1 927.7,675.8 934.8,681.8 925.3,687.7 876.7,686.5 875.5,680.6"/><polygon points="962.2,750.7 976.4,756.6 986.0,750.7 996.6,751.9 996.6,766.0 990.7,777.9 985.9,787.4 974.0,799.3 971.7,818.2 962.2,826.5 948.0,818.2 919.5,796.9 919.5,787.4"/><polygon points="724.4,664.3 737.5,654.8 754.1,643.0 757.6,635.8 789.6,637.0 803.8,645.3 818.1,647.7 833.5,641.8 834.7,673.8 813.3,671.4 803.8,678.5 797.9,673.3 789.6,672.6 784.9,680.9 765.9,684.4 763.5,689.2 733.9,690.4 735.1,695.1 733.9,705.8 719.7,707.0 718.5,692.7"/><polygon points="673.5,683.2 681.8,680.9 697.2,689.2 718.5,692.7 719.7,707.0 712.6,721.2 707.8,754.4 688.9,752.0 678.2,737.8 671.1,716.4 673.5,702.2"/><polygon points="656.9,689.2 673.5,699.8 671.1,707.0 656.9,705.8 654.5,702.2"/><polygon points="716.1,721.2 732.7,716.4 742.2,723.5 739.8,749.6 729.2,755.5 707.8,754.4 709.0,735.4"/><polygon points="720.9,707.0 735.1,708.1 770.7,714.0 770.7,733.0 751.7,728.3 742.2,723.5 732.7,716.4 719.7,716.4"/><polygon points="803.8,680.9 808.6,673.8 834.7,673.8 836.6,690.0 834.3,725.6 847.5,728.0 847.5,722.5 853.7,718.7 863.0,721.0 869.2,727.2 867.6,739.6 872.3,748.9 878.5,755.1 881.6,767.5 878.5,773.7 869.2,773.7 850.6,775.2 835.1,764.4 824.2,753.5 818.0,741.1 814.9,722.5 802.5,718.7 806.2,711.7"/><polygon points="836.6,690.0 842.8,690.0 845.9,694.6 855.2,704.0 859.1,708.6 864.5,714.8 870.7,722.5 869.2,727.2 863.0,721.0 853.7,718.7 847.5,722.5 847.5,728.0 834.3,725.6"/><polygon points="875.4,719.4 894.0,719.4 892.4,727.2 876.9,728.7"/><polygon points="887.8,783.0 903.3,779.9 903.3,767.5 907.9,767.5 909.5,796.9 892.4,800.0"/><polygon points="907.9,748.9 921.1,747.3 920.3,761.3 912.6,769.0 916.4,774.5 911.8,779.9 909.5,779.9"/><polygon points="770.0,711.7 779.3,714.8 773.0,753.0 770.0,754.0"/><polygon points="641.5,735.4 659.3,740.1 648.6,747.3 649.8,757.9 630.8,759.1"/><polygon points="623.2,777.0 628.6,761.5 637.9,760.8 681.3,760.8 684.4,780.1 641.0,786.3 630.1,787.1"/><polygon points="746.4,780.1 765.0,767.7 764.2,785.6 757.2,781.7"/><polygon points="765.7,790.4 811.3,762.1 840.4,805.9 801.0,799.2"/><polygon points="766.5,789.4 780.0,781.7 780.0,794.1"/><polygon points="644.1,823.5 667.3,814.2 673.5,828.2 690.6,845.2 672.0,860.7 662.7,842.1 653.4,844.5"/><polygon points="643.3,855.3 662.7,842.1 672.0,860.7 662.7,870.0"/><polygon points="690.6,845.2 718.5,821.2 729.3,829.7 738.6,835.9 737.1,839.0 730.9,843.7 729.3,853.0 724.7,860.7 721.6,863.8 698.3,865.4 696.8,851.4"/><polygon points="724.7,860.7 730.9,843.7 755.7,835.2 765.0,848.3 724.7,862.3"/><polygon points="762.0,818.6 794.9,825.0 794.0,833.2 761.1,827.7"/><polygon points="724.7,862.3 780.0,845.2 808.6,840.6 820.4,845.3 832.3,864.3 856.0,854.8 860.0,857.2 863.5,852.9 830.0,866.1 830.0,899.6 822.8,905.8 811.0,914.1 803.8,903.4 784.9,889.2 776.6,890.4 760.3,888.6 758.8,884.0 752.6,885.5 744.8,901.0 738.6,891.7 741.7,877.8 737.1,865.4"/><polygon points="680.5,884.0 690.6,884.0 701.4,888.6 695.2,897.1"/><polygon points="770.0,818.6 790.1,823.3 794.8,832.6 813.4,839.5 825.8,860.0 780.0,845.2 770.0,848.0"/><polygon points="850.4,825.2 862.1,819.4 879.6,817.2 891.3,838.3 905.8,834.0 911.7,844.2 917.5,858.8 926.3,864.6 932.1,882.1 884.0,896.7 889.8,912.7 870.8,921.5 863.5,901.1 835.8,902.5 830.0,899.6 830.0,866.1 863.5,852.9"/><polygon points="929.2,828.1 946.7,819.4 958.4,852.9 949.6,855.8 949.6,848.6 924.8,851.5 935.0,870.4 932.1,880.6 924.8,861.7 926.3,855.8 932.1,844.2 929.2,835.4"/><polygon points="962.2,750.7 976.4,756.6 986.0,750.7 996.6,751.9 996.6,766.0 990.7,777.9 985.9,787.4 974.0,799.3 971.7,818.2 962.2,826.5 951.1,825.2 946.7,819.4 943.8,804.8 936.5,801.9 926.3,804.8 919.0,799.0 917.5,788.8 921.8,782.5 939.5,765.9"/><polygon points="888.3,780.0 909.5,780.0 908.8,794.6 891.3,801.9 886.9,793.1"/><polygon points="909.5,794.6 917.5,793.1 920.4,801.9 914.6,817.9 901.5,806.3"/><polygon points="923.3,815.0 929.2,809.2 937.9,816.5 937.9,822.3 924.8,825.2"/><polygon points="951.1,825.2 961.3,825.2 959.8,845.6 955.4,852.9 952.5,844.2"/><polygon points="943.8,882.1 961.3,880.6 965.6,896.7 946.7,898.1"/><polygon points="932.1,880.6 935.0,870.4 943.8,864.6 945.2,871.9 942.3,879.2"/><polygon points="830.0,794.6 838.8,806.3 830.0,807.7"/><polygon points="912.6,781.4 921.8,782.5 919.5,796.9 918.8,790.7"/><polygon points="725.6,613.3 756.4,616.9 758.8,633.5 751.7,645.3 737.5,654.8 724.4,664.3"/><polygon points="659.3,680.9 671.1,667.8 681.8,680.9 673.5,702.2 656.9,689.2"/><polygon points="964.6,881.0 967.0,881.0 981.2,896.4 1007.2,913.0 1017.9,924.9 1026.2,936.7 1023.8,943.8 1015.5,942.7 1012.0,934.4 1006.0,929.6 965.8,929.6 967.0,915.4 969.3,910.7"/><polygon points="765.9,684.4 775.4,683.2 784.9,680.9 780.1,712.9 765.9,709.3"/><polyline points="875.4,362.5 875.4,413.5 861.2,415.8 865.9,442.0 856.4,443.0 856.4,469.2"/><polyline points="818.5,420.6 831.5,418.2 835.0,428.9 839.8,424.1 861.2,424.1"/><polyline points="824.4,456.1 835.0,458.5 837.5,468.0 832.7,479.8 842.2,484.6 848.1,494.1"/><polyline points="876.0,482.8 876.0,501.2 890.8,514.2"/><polyline points="730.0,485.7 734.2,482.9 743.8,480.2 747.9,469.2 758.8,465.1 767.0,469.2 778.0,470.6 782.0,480.2 783.4,488.4 795.7,492.5 809.4,495.2 819.0,499.3 828.5,511.7 846.3,513.0 851.8,522.5 853.1,528.0 849.0,532.1 842.2,536.2 847.6,545.8 846.3,556.7"/><polyline points="796.0,491.7 797.2,482.2 800.7,474.0"/><polyline points="730.0,519.8 747.9,519.8 749.2,523.9 761.5,526.6 773.8,532.1 780.7,537.6 790.2,534.9 803.9,533.5 820.3,534.9 836.7,537.6 840.8,533.5 844.9,536.2 847.6,544.4"/><polyline points="758.8,562.2 772.5,563.6 783.4,570.4 788.9,566.3 801.2,559.5 820.3,558.1 829.9,551.3 834.0,556.7 847.6,555.4"/><polyline points="784.8,569.0 788.9,605.9"/><polyline points="758.1,561.6 903.8,560.4 960.0,560.9 1013.0,561.0 1035.8,558.5 1050.0,561.0 1111.7,562.0"/><polyline points="894.4,511.8 894.4,552.0 903.8,553.3 903.8,560.4"/><polyline points="960.0,522.5 944.1,560.4"/><polyline points="884.6,562.2 884.6,580.0 866.8,589.5 853.1,605.9 840.8,619.6 836.7,627.8 835.4,657.9 834.0,674.3"/><polyline points="941.8,561.6 943.0,600.0 941.9,622.5"/><polyline points="760.2,615.5 771.1,608.7 790.2,603.2 803.9,588.2 817.6,582.7 831.3,578.6 840.8,566.3 849.0,562.2"/><polyline points="933.4,491.0 931.1,506.0 922.8,510.7 913.3,515.4 903.8,510.7 894.4,511.8"/><polyline points="1114.0,440.0 1114.0,470.8 1076.1,496.9 1064.3,523.0 1047.7,549.0 1050.0,561.0"/><polyline points="1024.0,482.7 1040.6,511.1 1031.1,534.8 1043.0,547.8 1035.8,558.5"/><polyline points="960.0,520.6 988.4,515.8 996.7,493.3 1024.0,482.7 1043.0,475.6 1064.3,466.1 1069.0,451.9 1083.3,440.0 1088.0,437.0 1111.7,444.1 1116.4,434.7 1118.8,425.2 1137.8,419.2 1142.5,413.3"/><polyline points="1014.5,558.5 1013.3,582.2 998.0,622.5 977.8,648.6"/><polyline points="1006.0,600.0 998.8,624.9"/><polyline points="840.0,647.4 859.0,641.5 937.2,648.6"/><polyline points="856.6,688.9 958.5,683.0 969.2,697.2 962.0,705.5 962.0,724.4 969.2,725.6 969.2,742.2 962.0,750.5"/><polyline points="623.7,816.9 637.9,821.6"/><polyline points="630.8,787.3 641.5,822.8"/><polyline points="645.0,786.0 658.0,817.0"/><polyline points="661.6,784.9 665.2,809.8"/><polyline points="666.4,807.4 692.4,795.6"/><polyline points="684.0,780.0 730.4,775.4"/><polyline points="720.9,816.9 763.5,789.6 808.6,762.4"/><polyline points="720.9,816.9 777.8,828.7"/><polyline points="796.7,828.7 846.5,814.5"/><polyline points="801.5,800.3 795.5,831.1"/><polyline points="765.9,792.0 841.8,807.4 860.0,854.8"/><polyline points="662.8,869.0 737.5,864.3"/><polyline points="690.0,867.8 691.3,883.3"/><polyline points="699.5,866.7 700.7,883.3"/><polyline points="704.3,883.3 725.6,879.7 729.2,916.4 732.7,923.5"/><polyline points="707.8,883.3 715.0,911.7"/><polyline points="724.4,862.0 785.0,843.0 808.6,840.6"/><polyline points="786.0,890.4 832.3,864.3"/><polyline points="808.6,880.9 815.7,902.2"/><polyline points="837.0,904.6 848.9,883.3 860.0,876.0"/><polyline points="848.4,776.7 871.0,773.2 879.3,770.8 880.4,740.0"/><polyline points="829.5,768.4 848.4,776.7"/><polyline points="839.0,806.4 820.0,800.0"/><polyline points="884.0,896.4 901.8,942.7"/><polyline points="901.8,942.7 965.8,929.6"/><polyline points="946.8,897.6 938.5,933.0"/><polyline points="866.0,850.0 884.0,896.4"/><polyline points="891.0,839.0 906.0,834.8"/><polyline points="850.0,824.0 866.0,850.0 925.0,835.0"/><polyline points="630.1,787.1 641.0,786.3 709.2,778.6 730.9,775.5"/><polyline points="630.9,789.4 643.3,823.5 653.4,844.5"/><polyline points="645.6,787.1 659.6,815.8"/><polyline points="661.1,785.6 666.6,806.5 690.6,796.4"/><polyline points="621.6,817.3 637.1,822.0 619.3,837.5"/><polyline points="628.6,843.7 644.1,829.7"/><polyline points="718.5,818.9 765.0,790.2"/><polyline points="693.7,791.0 696.8,809.6 707.6,818.9 718.5,817.3"/><polyline points="720.0,817.3 777.4,829.7"/><polyline points="765.0,800.3 761.9,823.5"/><polyline points="662.7,870.0 698.3,866.9 721.6,863.8 738.6,865.4"/><polyline points="690.6,868.5 690.6,882.5 699.9,882.5 699.9,867.0"/><polyline points="699.9,882.5 726.2,879.3 729.3,915.0"/><polyline points="706.1,884.0 715.4,915.0"/><polyline points="755.7,853.0 775.8,888.6"/><polyline points="737.1,760.0 732.4,775.5"/><polyline points="706.1,778.6 704.5,791.0 714.7,797.2 714.7,806.5 720.9,809.6 719.3,818.9"/><polyline points="724.7,777.0 715.4,802.0"/><polyline points="734.0,778.6 735.5,795.7 729.3,798.8 730.9,805.0"/><polyline points="770.0,786.1 810.3,761.3 847.5,738.0"/><polyline points="779.3,714.8 844.4,816.3 863.0,860.0"/><polyline points="770.0,792.3 839.7,806.2"/><polyline points="796.3,829.5 872.3,809.3 909.5,798.5"/><polyline points="801.0,799.2 794.8,832.6"/><polyline points="770.0,753.5 784.0,755.1 797.9,747.3"/><polyline points="870.7,809.3 878.5,824.8 884.7,821.7"/><polyline points="880.0,801.6 881.6,773.7"/><polyline points="890.9,838.8 940.0,821.7"/><polyline points="830.0,817.9 908.8,797.5"/><polyline points="830.0,866.1 946.7,817.2"/><polyline points="844.6,815.0 884.0,896.7 900.0,940.0"/><polyline points="891.3,838.3 913.1,888.0"/><polyline points="830.0,841.3 841.7,847.1 853.3,838.3"/><polyline points="834.4,902.5 849.0,882.1 857.7,855.8"/><polyline points="884.0,823.8 889.8,820.8 910.2,823.8 914.6,829.6"/><polyline points="914.6,817.9 923.3,804.8 929.2,803.3"/><polyline points="946.7,867.5 961.3,844.2"/><polyline points="961.3,879.2 978.8,867.5"/><polyline points="946.7,898.1 967.1,898.1"/></g></g></svg>
<svg style="position:absolute;left:20px;top:88px;" width="5" height="16" viewBox="0 0 5 16"><circle cx="1" cy="1" r="0.65" fill="#c2c2c2"/><circle cx="4" cy="1" r="0.65" fill="#c2c2c2"/><circle cx="1" cy="4" r="0.65" fill="#c2c2c2"/><circle cx="4" cy="4" r="0.65" fill="#c2c2c2"/><circle cx="1" cy="7" r="0.65" fill="#c2c2c2"/><circle cx="4" cy="7" r="0.65" fill="#c2c2c2"/><circle cx="1" cy="10" r="0.65" fill="#c2c2c2"/><circle cx="4" cy="10" r="0.65" fill="#c2c2c2"/><circle cx="1" cy="13" r="0.65" fill="#c2c2c2"/><circle cx="4" cy="13" r="0.65" fill="#c2c2c2"/></svg>
<svg style="position:absolute;left:235px;top:88px;" width="5" height="16" viewBox="0 0 5 16"><circle cx="1" cy="1" r="0.65" fill="#c2c2c2"/><circle cx="4" cy="1" r="0.65" fill="#c2c2c2"/><circle cx="1" cy="4" r="0.65" fill="#c2c2c2"/><circle cx="4" cy="4" r="0.65" fill="#c2c2c2"/><circle cx="1" cy="7" r="0.65" fill="#c2c2c2"/><circle cx="4" cy="7" r="0.65" fill="#c2c2c2"/><circle cx="1" cy="10" r="0.65" fill="#c2c2c2"/><circle cx="4" cy="10" r="0.65" fill="#c2c2c2"/><circle cx="1" cy="13" r="0.65" fill="#c2c2c2"/><circle cx="4" cy="13" r="0.65" fill="#c2c2c2"/></svg>
<svg style="position:absolute;left:779px;top:88px;" width="5" height="16" viewBox="0 0 5 16"><circle cx="1" cy="1" r="0.65" fill="#c2c2c2"/><circle cx="4" cy="1" r="0.65" fill="#c2c2c2"/><circle cx="1" cy="4" r="0.65" fill="#c2c2c2"/><circle cx="4" cy="4" r="0.65" fill="#c2c2c2"/><circle cx="1" cy="7" r="0.65" fill="#c2c2c2"/><circle cx="4" cy="7" r="0.65" fill="#c2c2c2"/><circle cx="1" cy="10" r="0.65" fill="#c2c2c2"/><circle cx="4" cy="10" r="0.65" fill="#c2c2c2"/><circle cx="1" cy="13" r="0.65" fill="#c2c2c2"/><circle cx="4" cy="13" r="0.65" fill="#c2c2c2"/></svg>
<svg style="position:absolute;left:1094px;top:88px;" width="5" height="16" viewBox="0 0 5 16"><circle cx="1" cy="1" r="0.65" fill="#c2c2c2"/><circle cx="4" cy="1" r="0.65" fill="#c2c2c2"/><circle cx="1" cy="4" r="0.65" fill="#c2c2c2"/><circle cx="4" cy="4" r="0.65" fill="#c2c2c2"/><circle cx="1" cy="7" r="0.65" fill="#c2c2c2"/><circle cx="4" cy="7" r="0.65" fill="#c2c2c2"/><circle cx="1" cy="10" r="0.65" fill="#c2c2c2"/><circle cx="4" cy="10" r="0.65" fill="#c2c2c2"/><circle cx="1" cy="13" r="0.65" fill="#c2c2c2"/><circle cx="4" cy="13" r="0.65" fill="#c2c2c2"/></svg>
<svg style="position:absolute;left:1290px;top:88px;" width="5" height="16" viewBox="0 0 5 16"><circle cx="1" cy="1" r="0.65" fill="#c2c2c2"/><circle cx="4" cy="1" r="0.65" fill="#c2c2c2"/><circle cx="1" cy="4" r="0.65" fill="#c2c2c2"/><circle cx="4" cy="4" r="0.65" fill="#c2c2c2"/><circle cx="1" cy="7" r="0.65" fill="#c2c2c2"/><circle cx="4" cy="7" r="0.65" fill="#c2c2c2"/><circle cx="1" cy="10" r="0.65" fill="#c2c2c2"/><circle cx="4" cy="10" r="0.65" fill="#c2c2c2"/><circle cx="1" cy="13" r="0.65" fill="#c2c2c2"/><circle cx="4" cy="13" r="0.65" fill="#c2c2c2"/></svg>
<svg style="position:absolute;left:1668px;top:88px;" width="5" height="16" viewBox="0 0 5 16"><circle cx="1" cy="1" r="0.65" fill="#c2c2c2"/><circle cx="4" cy="1" r="0.65" fill="#c2c2c2"/><circle cx="1" cy="4" r="0.65" fill="#c2c2c2"/><circle cx="4" cy="4" r="0.65" fill="#c2c2c2"/><circle cx="1" cy="7" r="0.65" fill="#c2c2c2"/><circle cx="4" cy="7" r="0.65" fill="#c2c2c2"/><circle cx="1" cy="10" r="0.65" fill="#c2c2c2"/><circle cx="4" cy="10" r="0.65" fill="#c2c2c2"/><circle cx="1" cy="13" r="0.65" fill="#c2c2c2"/><circle cx="4" cy="13" r="0.65" fill="#c2c2c2"/></svg>
<div style="left:241px;top:81px;width:32px;height:31px;background:#dcdcdc;border:1px solid #c2c2c2;border-radius:3px"></div>
<svg style="position:absolute;left:31px;top:84px;overflow:visible" width="24" height="24" viewBox="0 0 24 24"><path d="M5 1.5H14L19.5 7V22.5H5Z" fill="#fff" stroke="#555" stroke-width="1.1"/><path d="M14 1.5V7H19.5" fill="#eee" stroke="#555" stroke-width="1.1"/></svg>
<svg style="position:absolute;left:64px;top:84px;overflow:visible" width="24" height="24" viewBox="0 0 24 24"><path d="M1 5H9L11 7H20V10H1Z" fill="#e9c648"/><path d="M1 20L3.5 10H23L20.5 20Z" fill="#f9d85a" stroke="#e0b830" stroke-width="0.8"/><path d="M1 5V20" stroke="#e0b830"/></svg>
<svg style="position:absolute;left:98px;top:84px;overflow:visible" width="24" height="24" viewBox="0 0 24 24"><rect x="2" y="2" width="20" height="20" rx="2" fill="#6a94c4" stroke="#4a74a4"/><rect x="5.5" y="3.5" width="13" height="8" fill="#fff"/><path d="M7 5.5H17M7 7.5H17M7 9.5H17" stroke="#888" stroke-width="0.8"/><rect x="6" y="15" width="12" height="6" fill="#eee"/><rect x="8" y="16" width="2.5" height="4" fill="#4a74a4"/></svg>
<svg style="position:absolute;left:131px;top:84px;overflow:visible" width="24" height="24" viewBox="0 0 24 24"><path d="M7 3H17L21 7V20H7Z" fill="#fafafa" stroke="#999"/><path d="M2 3H11V8H7V20H2Z" fill="#f1d44e" stroke="#c9a92a"/><path d="M3 6H5M3 9H5M3 12H5M3 15H5M3 18H5" stroke="#a88b1a" stroke-width="0.8"/><rect x="13" y="13" width="11" height="11" rx="1.5" fill="#e0b820" stroke="#c09a10" stroke-width="0.6"/><path d="M18.5 14.98V22.02M14.98 18.5H22.02M16.036 16.036L20.964 20.964M20.964 16.036L16.036 20.964" stroke="#fff" stroke-width="1.3"/><circle cx="18.5" cy="18.5" r="1.4300000000000002" fill="#e0b820"/></svg>
<svg style="position:absolute;left:164px;top:84px;overflow:visible" width="24" height="24" viewBox="0 0 24 24"><path d="M2 3H17L22 8V21H2Z" fill="#fafafa" stroke="#777"/><rect x="4" y="6" width="13" height="13" fill="none" stroke="#aab"/><path d="M9 8C7 8 6 10 7 12L17 22" stroke="#555" stroke-width="3.4" stroke-linecap="round"/><path d="M9 8C7 8 6 10 7 12L17 22" stroke="#e8d37a" stroke-width="2" stroke-linecap="round"/></svg>
<svg style="position:absolute;left:197px;top:84px;overflow:visible" width="24" height="24" viewBox="0 0 24 24"><circle cx="6" cy="6" r="4" fill="#e0602e"/><path d="M12 11L20 3" stroke="#4a7dc0" stroke-width="2.6" stroke-linecap="round"/><rect x="2" y="13" width="8" height="8" fill="#88b088"/><text x="12" y="21" font-family="Liberation Sans" font-size="11" fill="#333">a</text></svg>
<svg style="position:absolute;left:246px;top:84px;overflow:visible" width="24" height="24" viewBox="0 0 24 24"><path d="M8 22C6 19 3 15 2.5 13C2 11.5 4 11 5 12L7 14V5C7 3.5 9 3.5 9 5V11V3C9 1.5 11 1.5 11 3V11V4C11 2.5 13 2.5 13 4V11V6C13 4.5 15 4.5 15 6V16C15 19 14 21 13 22Z" fill="#fff" stroke="#111" stroke-width="1.2"/></svg>
<svg style="position:absolute;left:279px;top:84px;overflow:visible" width="24" height="24" viewBox="0 0 24 24"><path d="M12 1L16 5H14V10H19V8L23 12L19 16V14H14V19H16L12 23L8 19H10V14H5V16L1 12L5 8V10H10V5H8Z" fill="#dcdcdc" stroke="#cfcfcf"/></svg>
<svg style="position:absolute;left:311px;top:84px;overflow:visible" width="24" height="24" viewBox="0 0 24 24"><path d="M2 22L8 16" stroke="#333" stroke-width="4.2" stroke-linecap="round"/><path d="M2.6 21.4L7.6 16.4" stroke="#e6c12e" stroke-width="2.4" stroke-linecap="round"/><circle cx="14" cy="10" r="8" fill="#f4f4f4" stroke="#555" stroke-width="1.4"/><path d="M14 5.5V14.5M9.5 10H18.5" stroke="#2f6fc0" stroke-width="2.4"/></svg>
<svg style="position:absolute;left:344px;top:84px;overflow:visible" width="24" height="24" viewBox="0 0 24 24"><path d="M2 22L8 16" stroke="#333" stroke-width="4.2" stroke-linecap="round"/><path d="M2.6 21.4L7.6 16.4" stroke="#e6c12e" stroke-width="2.4" stroke-linecap="round"/><circle cx="14" cy="10" r="8" fill="#f4f4f4" stroke="#555" stroke-width="1.4"/><path d="M9.5 10H18.5" stroke="#2f6fc0" stroke-width="2.4"/></svg>
<svg style="position:absolute;left:377px;top:84px;overflow:visible" width="24" height="24" viewBox="0 0 24 24"><path d="M2 22L8 16" stroke="#333" stroke-width="4.2" stroke-linecap="round"/><path d="M2.6 21.4L7.6 16.4" stroke="#e6c12e" stroke-width="2.4" stroke-linecap="round"/><circle cx="14" cy="10" r="8" fill="#f4f4f4" stroke="#555" stroke-width="1.4"/><path d="M4 1H10L7.5 3.5L10 6L7 8.5L4.5 6L2 8.5V1Z" fill="#5a8ac2"/><path d="M24 1V7L21.5 4.5L19 7L16.5 4.5L19 2L16.5 1Z" fill="#5a8ac2"/><path d="M24 19V13L21.5 15.5L19 13L16.5 15.5L19 18L17 19Z" fill="#5a8ac2"/></svg>
<svg style="position:absolute;left:410px;top:84px;overflow:visible" width="24" height="24" viewBox="0 0 24 24"><path d="M2 22L8 16" stroke="#d0d0d0" stroke-width="4.2" stroke-linecap="round"/><path d="M2.6 21.4L7.6 16.4" stroke="#d8d8d8" stroke-width="2.4" stroke-linecap="round"/><circle cx="14" cy="10" r="8" fill="#f0f0f0" stroke="#cfcfcf" stroke-width="1.4"/><rect x="6" y="4" width="6" height="10" fill="#e4e4e4"/><path d="M14 3V17" stroke="#ddd"/></svg>
<svg style="position:absolute;left:443px;top:84px;overflow:visible" width="24" height="24" viewBox="0 0 24 24"><rect x="2" y="3" width="10" height="12" fill="#fff" stroke="#555"/><path d="M2 22L8 16" stroke="#333" stroke-width="4.2" stroke-linecap="round"/><path d="M2.6 21.4L7.6 16.4" stroke="#e6c12e" stroke-width="2.4" stroke-linecap="round"/><circle cx="14" cy="10" r="8" fill="#f4f4f4" stroke="#555" stroke-width="1.4"/><path d="M14 2.5V17.5" stroke="#888"/></svg>
<svg style="position:absolute;left:476px;top:84px;overflow:visible" width="24" height="24" viewBox="0 0 24 24"><path d="M2 22L8 16" stroke="#d0d0d0" stroke-width="4.2" stroke-linecap="round"/><path d="M2.6 21.4L7.6 16.4" stroke="#d8d8d8" stroke-width="2.4" stroke-linecap="round"/><circle cx="14" cy="10" r="8" fill="#f0f0f0" stroke="#cfcfcf" stroke-width="1.4"/><text x="8.5" y="13" font-family="Liberation Sans" font-size="7" fill="#ccc">1:1</text></svg>
<svg style="position:absolute;left:509px;top:84px;overflow:visible" width="24" height="24" viewBox="0 0 24 24"><path d="M2 22L8 16" stroke="#333" stroke-width="4.2" stroke-linecap="round"/><path d="M2.6 21.4L7.6 16.4" stroke="#e6c12e" stroke-width="2.4" stroke-linecap="round"/><circle cx="14" cy="10" r="8" fill="#f4f4f4" stroke="#555" stroke-width="1.4"/><rect x="13" y="13" width="11" height="11" fill="#5a8ac2"/><path d="M20.5 15L16 18.5L20.5 22" fill="none" stroke="#fff" stroke-width="1.8"/></svg>
<svg style="position:absolute;left:542px;top:84px;overflow:visible" width="24" height="24" viewBox="0 0 24 24"><path d="M2 22L8 16" stroke="#d0d0d0" stroke-width="4.2" stroke-linecap="round"/><path d="M2.6 21.4L7.6 16.4" stroke="#d8d8d8" stroke-width="2.4" stroke-linecap="round"/><circle cx="14" cy="10" r="8" fill="#f0f0f0" stroke="#cfcfcf" stroke-width="1.4"/><rect x="13" y="13" width="11" height="11" fill="#dcdcdc"/><path d="M16.5 15L21 18.5L16.5 22" fill="none" stroke="#fff" stroke-width="1.8"/></svg>
<svg style="position:absolute;left:575px;top:84px;overflow:visible" width="24" height="24" viewBox="0 0 24 24"><path d="M3 3H18V20H5C3.5 20 3 19 3 18Z" fill="#eee" stroke="#888"/><path d="M3 3C5 3 5 5 5 6V20" fill="none" stroke="#888"/><rect x="13" y="13" width="11" height="11" rx="1.5" fill="#e0b820" stroke="#c09a10" stroke-width="0.6"/><path d="M18.5 14.98V22.02M14.98 18.5H22.02M16.036 16.036L20.964 20.964M20.964 16.036L16.036 20.964" stroke="#fff" stroke-width="1.3"/><circle cx="18.5" cy="18.5" r="1.4300000000000002" fill="#e0b820"/></svg>
<svg style="position:absolute;left:608px;top:84px;overflow:visible" width="24" height="24" viewBox="0 0 24 24"><path d="M1 9L6 3H22L20 13H3Z" fill="#e0e0e0" stroke="#aaa"/><path d="M1 9V15L3 18H20V13" fill="#d4d4d4" stroke="#aaa"/><rect x="13" y="13" width="11" height="11" rx="1.5" fill="#e0b820" stroke="#c09a10" stroke-width="0.6"/><path d="M18.5 14.98V22.02M14.98 18.5H22.02M16.036 16.036L20.964 20.964M20.964 16.036L16.036 20.964" stroke="#fff" stroke-width="1.3"/><circle cx="18.5" cy="18.5" r="1.4300000000000002" fill="#e0b820"/></svg>
<svg style="position:absolute;left:647px;top:84px;overflow:visible" width="24" height="24" viewBox="0 0 24 24"><path d="M3 1H11V19L7 23L3 19Z" fill="#5a86c0" stroke="#3a66a0"/><rect x="11" y="12" width="12" height="12" rx="1.5" fill="#e0b820" stroke="#c09a10" stroke-width="0.6"/><path d="M17.0 14.16V21.84M13.16 18.0H20.84M14.312000000000001 15.312000000000001L19.688 20.688M19.688 15.312000000000001L14.312000000000001 20.688" stroke="#fff" stroke-width="1.3"/><circle cx="17.0" cy="18.0" r="1.56" fill="#e0b820"/></svg>
<svg style="position:absolute;left:675px;top:84px;overflow:visible" width="24" height="24" viewBox="0 0 24 24"><path d="M2 3H18C20 3 21 4 21 6V21H4C3 21 2 20 2 19Z" fill="#eaeaea" stroke="#999"/><path d="M11 1H15V10L13 8L11 10Z" fill="#5a86c0"/></svg>
<svg style="position:absolute;left:707px;top:84px;overflow:visible" width="24" height="24" viewBox="0 0 24 24"><circle cx="12" cy="12" r="10.5" fill="#f6f6f6" stroke="#555" stroke-width="1.2"/><path d="M12 4V12L17 16" fill="none" stroke="#444" stroke-width="1.2"/></svg>
<svg style="position:absolute;left:740px;top:84px;overflow:visible" width="24" height="24" viewBox="0 0 24 24"><path d="M4 11C4 6 8 3 12.5 3C16 3 18 5 19 6L21 4V10H15L17 8C16 7 14.5 6 12.5 6C9.5 6 7 8.5 7 11Z" fill="#3a86d8"/><path d="M20 13C20 18 16 21 11.5 21C8 21 6 19 5 18L3 20V14H9L7 16C8 17 9.5 18 11.5 18C14.5 18 17 15.5 17 13Z" fill="#4a96e0"/></svg>
<svg style="position:absolute;left:789px;top:84px;overflow:visible" width="24" height="24" viewBox="0 0 24 24"><circle cx="9" cy="9" r="8" fill="#6a98d0" stroke="#4a78b0"/><text x="6.5" y="14" font-family="Liberation Serif" font-style="italic" font-weight="bold" font-size="12" fill="#fff">i</text><path d="M12 11L12 23L15 20L18 24L20 23L17 19H21Z" fill="#fff" stroke="#333" stroke-width="1"/></svg>
<svg style="position:absolute;left:822px;top:84px;overflow:visible" width="24" height="24" viewBox="0 0 24 24"><rect x="2" y="2" width="20" height="19" fill="none" stroke="#555" stroke-width="1.2"/><path d="M1 22H23" stroke="#555" stroke-width="2"/><path d="M3 6H21M3 11H21M3 16H21" stroke="#888" stroke-width="0.6"/><path d="M5 6L7 4L9 6L7 8Z M13 6L15 4L17 6L15 8Z" fill="none" stroke="#e04040"/><path d="M6 11L8 9L10 11L8 13Z M12 11L14 9L16 11L14 13Z" fill="none" stroke="#40a040"/><path d="M5 16L7 14L9 16L7 18Z M11 16L13 14L15 16L13 18Z M16 16L18 14L20 16L18 18Z" fill="none" stroke="#4070c0"/></svg>
<svg style="position:absolute;left:855px;top:84px;overflow:visible" width="24" height="24" viewBox="0 0 24 24"><path d="M12 1L14 5L18 3L18 7.5L22.5 8L20 12L22.5 16L18 16.5L18 21L14 19L12 23L10 19L6 21L6 16.5L1.5 16L4 12L1.5 8L6 7.5L6 3L10 5Z" fill="#6a94d4" stroke="#4a74b4" stroke-width="0.8"/><circle cx="12" cy="12" r="3.5" fill="#fff"/></svg>
<svg style="position:absolute;left:888px;top:84px;overflow:visible" width="24" height="24" viewBox="0 0 24 24"><path d="M4 3H19V8H17L16 6H9L14 12L9 18H16L17 16H19V21H4V19L10 12L4 5Z" fill="#8a1fa0"/></svg>
<svg style="position:absolute;left:921px;top:84px;overflow:visible" width="24" height="24" viewBox="0 0 24 24"><rect x="2" y="3" width="20" height="18" fill="#fff" stroke="#6a90c0" stroke-width="1.2"/><rect x="2" y="3" width="20" height="4" fill="#c0d4ec" stroke="#6a90c0"/><path d="M5 10H19M5 13H19M5 16H19M5 19H19" stroke="#6a90c0" stroke-width="1.2"/><path d="M8 8V21" stroke="#6a90c0" stroke-width="0.6"/></svg>
<svg style="position:absolute;left:966px;top:84px;overflow:visible" width="24" height="24" viewBox="0 0 24 24"><rect x="1" y="9" width="22" height="8" fill="#d8d8d8" stroke="#777"/><path d="M4 9V12M7 9V13M10 9V12M13 9V13M16 9V12M19 9V13" stroke="#555" stroke-width="0.8"/><path d="M2 6H22M2 4V8M22 4V8" stroke="#2a5aa0" stroke-width="1.6"/></svg>
<svg style="position:absolute;left:1011px;top:84px;overflow:visible" width="24" height="24" viewBox="0 0 24 24"><path d="M2 4C2 2 4 1 6 1H19C21 1 23 2 23 5V10C23 12 21 14 19 14H10L5 20L6 14H5C3 14 2 12 2 10Z" fill="#f6e65a" stroke="#c8b82a"/><circle cx="5" cy="20" r="2.5" fill="#6aa060"/></svg>
<svg style="position:absolute;left:1045px;top:84px;overflow:visible" width="24" height="24" viewBox="0 0 24 24"><circle cx="11" cy="11" r="9" fill="none" stroke="#d8d8d8" stroke-width="2"/><circle cx="11" cy="11" r="4" fill="#d8d8d8"/><path d="M15 15L22 22" stroke="#d8d8d8" stroke-width="3"/></svg>
<svg style="position:absolute;left:1105px;top:84px;overflow:visible" width="24" height="24" viewBox="0 0 24 24"><rect x="1" y="1" width="18" height="18" fill="#f6e05a" stroke="#333" stroke-dasharray="1.5 1.5"/><path d="M11 10V24L14.5 20.5L17.5 25L19.5 24L16.5 19.5H21Z" fill="#fff" stroke="#333"/></svg>
<svg style="position:absolute;left:1150px;top:84px;overflow:visible" width="24" height="24" viewBox="0 0 24 24"><rect x="8" y="9" width="14" height="13" fill="#f6e05a" stroke="#c9a92a"/><text x="1" y="13" font-family="Liberation Serif" font-size="16" fill="#6a3aa0">ε</text></svg>
<svg style="position:absolute;left:1195px;top:84px;overflow:visible" width="24" height="24" viewBox="0 0 24 24"><rect x="1" y="2" width="14" height="14" fill="#f6e05a" stroke="#c9a92a"/><rect x="7" y="7" width="14" height="14" fill="#f6e05a" stroke="#c9a92a"/><circle cx="18" cy="19" r="5" fill="#e03030"/><path d="M15 22L21 16" stroke="#fff" stroke-width="1.4"/></svg>
<svg style="position:absolute;left:1240px;top:84px;overflow:visible" width="24" height="24" viewBox="0 0 24 24"><rect x="1" y="1" width="16" height="15" fill="#f6e05a" stroke="#c9a92a"/><path d="M17 24C17 24 13 19 13 16.5A4 4 0 0 1 21 16.5C21 19 17 24 17 24Z" fill="#5a86c0"/><circle cx="17" cy="16.5" r="1.5" fill="#fff"/></svg>
<svg style="position:absolute;left:1302px;top:84px;overflow:visible" width="24" height="24" viewBox="0 0 24 24"><text x="1" y="22" font-family="Liberation Sans" font-weight="bold" font-size="18" fill="#4a7ec8">A</text><path d="M2 8L10 3L16 6" fill="none" stroke="#4a7ec8"/><circle cx="2" cy="8" r="1.5" fill="#4a7ec8"/><circle cx="10" cy="3" r="1.5" fill="#4a7ec8"/><path d="M19 1L20 4H23L20.5 6L21.5 9L19 7L16.5 9L17.5 6L15 4H18Z" fill="#4a7ec8"/><rect x="14" y="14" width="9" height="9" rx="1.5" fill="#e0b820" stroke="#c09a10" stroke-width="0.6"/><path d="M18.5 15.620000000000001V21.38M15.620000000000001 18.5H21.38M16.484 16.484L20.516 20.516M20.516 16.484L16.484 20.516" stroke="#fff" stroke-width="1.3"/><circle cx="18.5" cy="18.5" r="1.17" fill="#e0b820"/></svg>
<svg style="position:absolute;left:1346px;top:84px;overflow:visible" width="24" height="24" viewBox="0 0 24 24"><rect x="1" y="1" width="16" height="16" fill="none" stroke="#555" stroke-dasharray="2 2"/><path d="M6 4V22L10 18L13.5 24L15.5 23L12.5 17H18Z" fill="#fff" stroke="#333"/></svg>
<svg style="position:absolute;left:1380px;top:84px;overflow:visible" width="24" height="24" viewBox="0 0 24 24"><path d="M3 4L17 2L9 20L2 14Z" fill="none" stroke="#333" stroke-width="1.2"/><circle cx="3" cy="4" r="2.2" fill="#3a7ae0"/><circle cx="17" cy="2.5" r="2.2" fill="#3a7ae0"/><circle cx="9" cy="20" r="2.2" fill="#3a7ae0"/><circle cx="2.5" cy="14" r="2.2" fill="#3a7ae0"/><rect x="13" y="13" width="11" height="11" rx="1.5" fill="#5a9a55"/><path d="M18.5 15V22M15 18.5H22" stroke="#fff" stroke-width="2"/></svg>
<svg style="position:absolute;left:1412px;top:84px;overflow:visible" width="24" height="24" viewBox="0 0 24 24"><path d="M3 13L8 4L20 2M3 13L9 20" fill="none" stroke="#333" stroke-width="1.2"/><circle cx="3" cy="13" r="2.2" fill="#3a7ae0"/><circle cx="8" cy="4" r="2.2" fill="#3a7ae0"/><circle cx="20" cy="2.5" r="2.2" fill="#3a7ae0"/><circle cx="9" cy="20" r="2.2" fill="#3a7ae0"/><rect x="13" y="13" width="11" height="11" rx="1.5" fill="#5a9a55"/><path d="M18.5 15V22M15 18.5H22" stroke="#fff" stroke-width="2"/></svg>
<svg style="position:absolute;left:1446px;top:84px;overflow:visible" width="24" height="24" viewBox="0 0 24 24"><path d="M10 1L12.8 7.5H19.5L14 11.5L16 18L10 14L4 18L6 11.5L0.5 7.5H7.2Z" fill="#f8dc80" stroke="#c8a030"/><rect x="13" y="13" width="11" height="11" rx="1.5" fill="#5a9a55"/><path d="M18.5 15V22M15 18.5H22" stroke="#fff" stroke-width="2"/></svg>
<svg style="position:absolute;left:1480px;top:84px;overflow:visible" width="24" height="24" viewBox="0 0 24 24"><text x="6" y="15" font-family="Liberation Serif" font-size="16" fill="#333">T</text><rect x="1" y="17" width="3" height="3" fill="#888"/><rect x="13" y="13" width="11" height="11" rx="1.5" fill="#5a9a55"/><path d="M18.5 15V22M15 18.5H22" stroke="#fff" stroke-width="2"/></svg>
<svg style="position:absolute;left:1512px;top:84px;overflow:visible" width="24" height="24" viewBox="0 0 24 24"><text x="1" y="12" font-family="Liberation Sans" font-size="8" fill="#333">a</text><text x="7" y="8" font-family="Liberation Sans" font-size="8" fill="#333">b</text><text x="14" y="7" font-family="Liberation Sans" font-size="8" fill="#333">c</text><path d="M2 16L6 13L11 12L16 9" fill="none" stroke="#777" stroke-dasharray="2 2"/><rect x="13" y="13" width="11" height="11" rx="1.5" fill="#5a9a55"/><path d="M18.5 15V22M15 18.5H22" stroke="#fff" stroke-width="2"/></svg>
<svg style="position:absolute;left:1546px;top:84px;overflow:visible" width="24" height="24" viewBox="0 0 24 24"><rect x="1" y="1" width="19" height="19" fill="#fff" stroke="#666"/><text x="4" y="16" font-family="Liberation Serif" font-size="16" fill="#333">T</text><rect x="13" y="13" width="11" height="11" rx="1.5" fill="#5a9a55"/><path d="M18.5 15V22M15 18.5H22" stroke="#fff" stroke-width="2"/></svg>
<svg style="position:absolute;left:1578px;top:84px;overflow:visible" width="24" height="24" viewBox="0 0 24 24"><rect x="1" y="3" width="21" height="16" fill="#5a96d8"/><path d="M1 14C6 10 14 11 22 13V19H1Z" fill="#d8c070"/><rect x="13" y="13" width="11" height="11" rx="1.5" fill="#5a9a55"/><path d="M18.5 15V22M15 18.5H22" stroke="#fff" stroke-width="2"/></svg>
<svg style="position:absolute;left:1617px;top:84px;overflow:visible" width="24" height="24" viewBox="0 0 24 24"><path d="M1 2H22V16H9L4 22V16H1Z" fill="#fafafa" stroke="#888"/><path d="M4 6H8M4 9H8M4 12H8" stroke="#4a7ec8"/><text x="9" y="12" font-family="Liberation Mono" font-size="8" fill="#333">&lt;/&gt;</text></svg>
<svg style="position:absolute;left:1677px;top:84px;overflow:visible" width="24" height="24" viewBox="0 0 24 24"><path d="M6 6H23V18H6L1 12Z" fill="#f0d030" stroke="#b89a10"/><text x="7.5" y="15.5" font-family="Liberation Sans" font-weight="bold" font-size="9" fill="#333">abc</text></svg>
<svg style="position:absolute;left:1711px;top:84px;overflow:visible" width="24" height="24" viewBox="0 0 24 24"><circle cx="9" cy="9" r="8" fill="#e03a2a"/><path d="M9 9L9 1A8 8 0 0 1 17 9Z" fill="#f0d030"/><path d="M9 9L1 9A8 8 0 0 1 9 1Z" fill="#3aa040"/><rect x="13" y="15" width="3" height="9" fill="#3aa040"/><rect x="17" y="11" width="3" height="13" fill="#e03a2a"/><rect x="10" y="19" width="3" height="5" fill="#f0d030"/></svg>
<svg style="position:absolute;left:1750px;top:84px;overflow:visible" width="24" height="24" viewBox="0 0 24 24"><path d="M6 6H23V18H6L1 12Z" fill="#c0d8f0" stroke="#5a86c0"/><text x="6.5" y="15.5" font-family="Liberation Sans" font-weight="bold" font-size="9" fill="#333">ab</text><path d="M17 9V18" stroke="#555"/><circle cx="19" cy="20" r="4" fill="#c02020"/></svg>
<svg style="position:absolute;left:1782px;top:84px;overflow:visible" width="24" height="24" viewBox="0 0 24 24"><path d="M6 6H23V18H6L1 12Z" fill="#fff" stroke="#e03030" stroke-width="1.4"/><text x="7.5" y="15.5" font-family="Liberation Sans" font-weight="bold" font-size="9" fill="#e03030">abc</text></svg>
<svg style="position:absolute;left:1823px;top:84px;overflow:visible" width="24" height="24" viewBox="0 0 24 24"><path d="M6 6H23V18H6L1 12Z" fill="#f0d030" stroke="#b89a10"/><text x="6.5" y="15.5" font-family="Liberation Sans" font-weight="bold" font-size="9" fill="#333">ab</text><path d="M17 9V18" stroke="#555"/><circle cx="19" cy="20" r="4" fill="#c02020"/></svg>
<svg style="position:absolute;left:1855px;top:84px;overflow:visible" width="24" height="24" viewBox="0 0 24 24"><path d="M6 2H23V14H6L1 8Z" fill="#f0d030" stroke="#b89a10"/><text x="7.5" y="11.5" font-family="Liberation Sans" font-weight="bold" font-size="9" fill="#333">abc</text><path d="M8 19Q15 13 22 19Q15 25 8 19Z" fill="#fff" stroke="#333"/><circle cx="15" cy="19" r="2.5" fill="#2a5aa0"/></svg>
<svg style="position:absolute;left:950px;top:94px;" width="9" height="5" viewBox="0 0 9 5"><path d="M0 0H9L4.5 5Z" fill="#555"/></svg>
<svg style="position:absolute;left:996px;top:94px;" width="9" height="5" viewBox="0 0 9 5"><path d="M0 0H9L4.5 5Z" fill="#555"/></svg>
<svg style="position:absolute;left:1076px;top:94px;" width="9" height="5" viewBox="0 0 9 5"><path d="M0 0H9L4.5 5Z" fill="#d0d0d0"/></svg>
<svg style="position:absolute;left:1134px;top:94px;" width="9" height="5" viewBox="0 0 9 5"><path d="M0 0H9L4.5 5Z" fill="#555"/></svg>
<svg style="position:absolute;left:1180px;top:94px;" width="9" height="5" viewBox="0 0 9 5"><path d="M0 0H9L4.5 5Z" fill="#555"/></svg>
<svg style="position:absolute;left:1224px;top:94px;" width="9" height="5" viewBox="0 0 9 5"><path d="M0 0H9L4.5 5Z" fill="#555"/></svg>
<svg style="position:absolute;left:1269px;top:94px;" width="9" height="5" viewBox="0 0 9 5"><path d="M0 0H9L4.5 5Z" fill="#555"/></svg>
<svg style="position:absolute;left:1330px;top:94px;" width="9" height="5" viewBox="0 0 9 5"><path d="M0 0H9L4.5 5Z" fill="#555"/></svg>
<svg style="position:absolute;left:1647px;top:94px;" width="9" height="5" viewBox="0 0 9 5"><path d="M0 0H9L4.5 5Z" fill="#555"/></svg>
<div style="left:1609px;top:84px;width:1px;height:22px;background:#d0d0d0"></div>
<div style="left:1742px;top:84px;width:1px;height:22px;background:#d0d0d0"></div>
<div style="left:1815px;top:84px;width:1px;height:22px;background:#d0d0d0"></div>
<span style="left:1906px;top:86.7px;font:normal 18px 'Liberation Sans';line-height:18px;color:#555;">»</span>
<svg style="position:absolute;left:20px;top:127px;" width="5" height="16" viewBox="0 0 5 16"><circle cx="1" cy="1" r="0.65" fill="#c2c2c2"/><circle cx="4" cy="1" r="0.65" fill="#c2c2c2"/><circle cx="1" cy="4" r="0.65" fill="#c2c2c2"/><circle cx="4" cy="4" r="0.65" fill="#c2c2c2"/><circle cx="1" cy="7" r="0.65" fill="#c2c2c2"/><circle cx="4" cy="7" r="0.65" fill="#c2c2c2"/><circle cx="1" cy="10" r="0.65" fill="#c2c2c2"/><circle cx="4" cy="10" r="0.65" fill="#c2c2c2"/><circle cx="1" cy="13" r="0.65" fill="#c2c2c2"/><circle cx="4" cy="13" r="0.65" fill="#c2c2c2"/></svg>
<svg style="position:absolute;left:553px;top:127px;" width="5" height="16" viewBox="0 0 5 16"><circle cx="1" cy="1" r="0.65" fill="#c2c2c2"/><circle cx="4" cy="1" r="0.65" fill="#c2c2c2"/><circle cx="1" cy="4" r="0.65" fill="#c2c2c2"/><circle cx="4" cy="4" r="0.65" fill="#c2c2c2"/><circle cx="1" cy="7" r="0.65" fill="#c2c2c2"/><circle cx="4" cy="7" r="0.65" fill="#c2c2c2"/><circle cx="1" cy="10" r="0.65" fill="#c2c2c2"/><circle cx="4" cy="10" r="0.65" fill="#c2c2c2"/><circle cx="1" cy="13" r="0.65" fill="#c2c2c2"/><circle cx="4" cy="13" r="0.65" fill="#c2c2c2"/></svg>
<svg style="position:absolute;left:1220px;top:127px;" width="5" height="16" viewBox="0 0 5 16"><circle cx="1" cy="1" r="0.65" fill="#c2c2c2"/><circle cx="4" cy="1" r="0.65" fill="#c2c2c2"/><circle cx="1" cy="4" r="0.65" fill="#c2c2c2"/><circle cx="4" cy="4" r="0.65" fill="#c2c2c2"/><circle cx="1" cy="7" r="0.65" fill="#c2c2c2"/><circle cx="4" cy="7" r="0.65" fill="#c2c2c2"/><circle cx="1" cy="10" r="0.65" fill="#c2c2c2"/><circle cx="4" cy="10" r="0.65" fill="#c2c2c2"/><circle cx="1" cy="13" r="0.65" fill="#c2c2c2"/><circle cx="4" cy="13" r="0.65" fill="#c2c2c2"/></svg>
<svg style="position:absolute;left:1688px;top:127px;" width="5" height="16" viewBox="0 0 5 16"><circle cx="1" cy="1" r="0.65" fill="#c2c2c2"/><circle cx="4" cy="1" r="0.65" fill="#c2c2c2"/><circle cx="1" cy="4" r="0.65" fill="#c2c2c2"/><circle cx="4" cy="4" r="0.65" fill="#c2c2c2"/><circle cx="1" cy="7" r="0.65" fill="#c2c2c2"/><circle cx="4" cy="7" r="0.65" fill="#c2c2c2"/><circle cx="1" cy="10" r="0.65" fill="#c2c2c2"/><circle cx="4" cy="10" r="0.65" fill="#c2c2c2"/><circle cx="1" cy="13" r="0.65" fill="#c2c2c2"/><circle cx="4" cy="13" r="0.65" fill="#c2c2c2"/></svg>
<svg style="position:absolute;left:31px;top:123px;overflow:visible" width="24" height="24" viewBox="0 0 24 24"><g transform="rotate(-40 12 12)"><path d="M5.5 3V12A6.5 6.5 0 0 0 18.5 12V3" fill="none" stroke="#8a0c0c" stroke-width="6.4"/><path d="M5.5 3V12A6.5 6.5 0 0 0 18.5 12V3" fill="none" stroke="#dc1a1a" stroke-width="4.6"/><rect x="2.5" y="1" width="6" height="4" fill="#f4f4f4" stroke="#999" stroke-width="0.6"/><rect x="15.5" y="1" width="6" height="4" fill="#f4f4f4" stroke="#999" stroke-width="0.6"/></g></svg>
<svg style="position:absolute;left:67px;top:123px;overflow:visible" width="24" height="24" viewBox="0 0 24 24"><path d="M4 3L10 14L6 22M10 14L20 4M10 14L20 14" fill="none" stroke="#d4d4d4" stroke-width="1.5"/><circle cx="4" cy="3" r="2" fill="#ddd"/><circle cx="20" cy="4" r="2" fill="#ddd"/><circle cx="20" cy="14" r="2" fill="#ddd"/><circle cx="6" cy="22" r="2" fill="#ddd"/></svg>
<svg style="position:absolute;left:86px;top:143px;" width="9" height="5" viewBox="0 0 9 5"><path d="M0 0H9L4.5 5Z" fill="#d4d4d4"/></svg>
<div style="left:94px;top:121px;width:31px;height:30px;background:#dcdcdc;border:1px solid #c2c2c2;border-radius:3px"></div>
<svg style="position:absolute;left:100px;top:127px;" width="20" height="18" viewBox="0 0 20 18"><circle cx="4" cy="4" r="1.6" fill="none" stroke="#aaa"/><circle cx="15" cy="5" r="1.6" fill="none" stroke="#aaa"/><circle cx="9" cy="14" r="1.6" fill="none" stroke="#aaa"/></svg>
<div style="left:127px;top:121px;width:123px;height:30px;background:#f0f0f0;border:1px solid #c8c8c8;border-radius:3px"></div>
<div style="left:235px;top:122px;width:1px;height:28px;background:#d4d4d4"></div>
<svg style="position:absolute;left:239px;top:127px;" width="8" height="5" viewBox="0 0 8 5"><path d="M0 5H8L4 0Z" fill="#ccc"/></svg>
<svg style="position:absolute;left:239px;top:141px;" width="8" height="5" viewBox="0 0 8 5"><path d="M0 0H8L4 5Z" fill="#ccc"/></svg>
<span style="left:131px;top:127.9px;font:normal 16px 'Liberation Sans';line-height:16px;color:#aaa;letter-spacing:-0.398px;">12</span>
<div style="left:252px;top:121px;width:112px;height:30px;background:#f4f4f4;border:1px solid #d0d0d0;border-radius:3px"></div>
<span style="left:256px;top:127.9px;font:normal 16px 'Liberation Sans';line-height:16px;color:#b0b0b0;letter-spacing:0.047px;">px</span>
<svg style="position:absolute;left:348px;top:134px;" width="8" height="4" viewBox="0 0 8 4"><path d="M0 0H8L4 4Z" fill="#ccc"/></svg>
<svg style="position:absolute;left:370px;top:123px;overflow:visible" width="24" height="24" viewBox="0 0 24 24"><path d="M11 13L3 3M11 13L22 9M11 13V24" stroke="#5aa060" stroke-width="1.6"/><circle cx="11" cy="13" r="2.5" fill="none" stroke="#777"/></svg>
<svg style="position:absolute;left:401px;top:123px;overflow:visible" width="24" height="24" viewBox="0 0 24 24"><path d="M8 2C14 1 19 2 20 6C21 11 15 12 14 15C13 19 12 22 9 22C5 22 3 17 3 13C3 8 3 3 8 2Z" fill="#cfcfcf" stroke="#777"/><path d="M6 3C10 3 12 5 12 9C12 13 14 15 13 19C12 22 7 22 5 19C3 15 2 10 3 6C3.5 4 4.5 3 6 3Z" fill="#88c080" stroke="#444"/><path d="M17 21H23L20 24Z" fill="#444"/></svg>
<svg style="position:absolute;left:435px;top:123px;overflow:visible" width="24" height="24" viewBox="0 0 24 24"><path d="M3 3L21 21M21 3L3 21" stroke="#d8d8d8" stroke-width="2"/></svg>
<svg style="position:absolute;left:468px;top:123px;overflow:visible" width="24" height="24" viewBox="0 0 24 24"><path d="M3 3L10 11L14 9L21 3M3 21L10 13L14 15L21 21" fill="none" stroke="#d4d4d4" stroke-width="2.5"/></svg>
<svg style="position:absolute;left:511px;top:123px;overflow:visible" width="24" height="24" viewBox="0 0 24 24"><path d="M3 20L11 6L20 14" fill="none" stroke="#d8d8d8" stroke-width="2.5"/><circle cx="11" cy="6" r="2.5" fill="#ddd"/></svg>
<svg style="position:absolute;left:562px;top:123px;overflow:visible" width="24" height="24" viewBox="0 0 24 24"><path d="M2 22L20 2V22Z" fill="#eee" stroke="#bbb" stroke-width="1.2"/><path d="M8 19L16 10V19Z" fill="#f8f8f8" stroke="#bbb"/><path d="M17 6H20M17 9H20M17 12H20M17 15H20" stroke="#bbb"/></svg>
<svg style="position:absolute;left:596px;top:123px;overflow:visible" width="24" height="24" viewBox="0 0 24 24"><path d="M4 4C8 1 14 3 18 3C23 3 24 9 19 11C15 13 12 15 7 13C2 11 1 7 4 4Z" fill="#dcdcdc" stroke="#cfcfcf"/><rect x="12" y="13" width="10" height="10" rx="1.5" fill="#d8d8d8"/><path d="M14 18H20M17.5 15.5L20 18L17.5 20.5" fill="none" stroke="#f6f6f6" stroke-width="1.5"/></svg>
<svg style="position:absolute;left:639px;top:123px;overflow:visible" width="24" height="24" viewBox="0 0 24 24"><path d="M4 4C8 1 14 3 18 3C23 3 24 9 19 11C15 13 12 15 7 13C2 11 1 7 4 4Z" fill="#dcdcdc" stroke="#cfcfcf"/><rect x="13" y="13" width="10" height="10" rx="1.5" fill="#d4d4d4"/><circle cx="18.0" cy="18.0" r="2" fill="none" stroke="#f4f4f4" stroke-width="1.3"/></svg>
<svg style="position:absolute;left:673px;top:123px;overflow:visible" width="24" height="24" viewBox="0 0 24 24"><path d="M4 4C8 1 14 3 18 3C23 3 24 9 19 11C15 13 12 15 7 13C2 11 1 7 4 4Z" fill="#dcdcdc" stroke="#cfcfcf"/><rect x="13" y="13" width="10" height="10" rx="1.5" fill="#d4d4d4"/><circle cx="18.0" cy="18.0" r="2" fill="none" stroke="#f4f4f4" stroke-width="1.3"/></svg>
<svg style="position:absolute;left:706px;top:123px;overflow:visible" width="24" height="24" viewBox="0 0 24 24"><circle cx="9" cy="9" r="7" fill="#dcdcdc" stroke="#cfcfcf"/><path d="M12 9L20 13V21L12 24L6 20V13Z" fill="#e0e0e0" stroke="#cfcfcf"/></svg>
<svg style="position:absolute;left:739px;top:123px;overflow:visible" width="24" height="24" viewBox="0 0 24 24"><path d="M4 4C8 1 14 3 18 3C23 3 24 9 19 11C15 13 12 15 7 13C2 11 1 7 4 4Z" fill="#dcdcdc" stroke="#cfcfcf"/><rect x="13" y="13" width="10" height="10" rx="1.5" fill="#d4d4d4"/><circle cx="18.0" cy="18.0" r="2" fill="none" stroke="#f4f4f4" stroke-width="1.3"/></svg>
<svg style="position:absolute;left:772px;top:123px;overflow:visible" width="24" height="24" viewBox="0 0 24 24"><path d="M4 3C8 1 14 2 18 3C23 4 22 10 18 11C14 12 9 12 5 11C1 9 1 5 4 3Z" fill="#dcdcdc" stroke="#cfcfcf"/><path d="M3 20C3 16 7 14 10 16L8 22Z" fill="#d8d8d8"/><rect x="13" y="13" width="10" height="10" rx="1.5" fill="#d4d4d4"/><circle cx="18.0" cy="18.0" r="2" fill="none" stroke="#f4f4f4" stroke-width="1.3"/></svg>
<svg style="position:absolute;left:805px;top:123px;overflow:visible" width="24" height="24" viewBox="0 0 24 24"><path d="M4 4C8 1 14 3 18 3C23 3 24 9 19 11C15 13 12 15 7 13C2 11 1 7 4 4Z" fill="#dcdcdc" stroke="#cfcfcf"/><rect x="13" y="13" width="10" height="10" rx="1.5" fill="#d4d4d4"/><circle cx="18.0" cy="18.0" r="2" fill="none" stroke="#f4f4f4" stroke-width="1.3"/></svg>
<svg style="position:absolute;left:838px;top:123px;overflow:visible" width="24" height="24" viewBox="0 0 24 24"><path d="M4 4C8 1 14 3 18 3C23 3 24 9 19 11C15 13 12 15 7 13C2 11 1 7 4 4Z" fill="#dcdcdc" stroke="#cfcfcf"/><rect x="13" y="13" width="10" height="10" rx="1.5" fill="#d4d4d4"/><circle cx="18.0" cy="18.0" r="2" fill="none" stroke="#f4f4f4" stroke-width="1.3"/></svg>
<svg style="position:absolute;left:871px;top:123px;overflow:visible" width="24" height="24" viewBox="0 0 24 24"><path d="M4 3C8 1 14 2 18 3C23 4 22 10 18 11C14 12 9 12 5 11C1 9 1 5 4 3Z" fill="#dcdcdc" stroke="#cfcfcf"/><path d="M3 20C3 16 7 14 10 16L8 22Z" fill="#d8d8d8"/><rect x="13" y="13" width="10" height="10" rx="1.5" fill="#d4d4d4"/><circle cx="18.0" cy="18.0" r="2" fill="none" stroke="#f4f4f4" stroke-width="1.3"/></svg>
<svg style="position:absolute;left:904px;top:123px;overflow:visible" width="24" height="24" viewBox="0 0 24 24"><path d="M4 4C8 0 14 2 18 4C22 6 20 11 16 12C13 13 12 20 8 20C4 20 5 14 3 11C1 8 2 6 4 4Z" fill="#dcdcdc" stroke="#cfcfcf"/></svg>
<svg style="position:absolute;left:937px;top:123px;overflow:visible" width="24" height="24" viewBox="0 0 24 24"><path d="M4 18C1 15 3 11 7 9C11 7 12 3 16 2C21 1 23 6 20 9C17 12 14 16 10 19C8 21 6 20 4 18Z" fill="#dcdcdc" stroke="#cfcfcf"/></svg>
<svg style="position:absolute;left:970px;top:123px;overflow:visible" width="24" height="24" viewBox="0 0 24 24"><path d="M3 3L9 12L3 22M9 12H21" fill="none" stroke="#d6d6d6" stroke-width="1.6"/><circle cx="3" cy="3" r="2" fill="#ddd"/><circle cx="21" cy="12" r="2" fill="#ddd"/><rect x="13" y="13" width="10" height="10" rx="1.5" fill="#d4d4d4"/><circle cx="18.0" cy="18.0" r="2" fill="none" stroke="#f4f4f4" stroke-width="1.3"/></svg>
<svg style="position:absolute;left:1004px;top:123px;overflow:visible" width="24" height="24" viewBox="0 0 24 24"><path d="M12 1V23M3 8H21M3 16H21" stroke="#d8d8d8" stroke-width="1.6"/><rect x="2" y="18" width="5" height="5" fill="none" stroke="#ddd"/></svg>
<svg style="position:absolute;left:1037px;top:123px;overflow:visible" width="24" height="24" viewBox="0 0 24 24"><path d="M5 2L14 16M19 2L10 16" stroke="#d4d4d4" stroke-width="2"/><circle cx="8" cy="19" r="3.5" fill="none" stroke="#d4d4d4" stroke-width="1.8"/><circle cx="16" cy="19" r="3.5" fill="none" stroke="#d4d4d4" stroke-width="1.8"/></svg>
<svg style="position:absolute;left:1070px;top:123px;overflow:visible" width="24" height="24" viewBox="0 0 24 24"><path d="M5 2L14 16M19 2L10 16" stroke="#d4d4d4" stroke-width="2"/><circle cx="8" cy="19" r="3.5" fill="none" stroke="#d4d4d4" stroke-width="1.8"/><circle cx="16" cy="19" r="3.5" fill="none" stroke="#d4d4d4" stroke-width="1.8"/></svg>
<svg style="position:absolute;left:1103px;top:123px;overflow:visible" width="24" height="24" viewBox="0 0 24 24"><path d="M12 22C4 15 1 11 3 6C5 2 10 2 12 6C14 2 19 2 21 6C23 11 20 15 12 22Z" fill="none" stroke="#d4d4d4" stroke-width="1.8"/><path d="M12 6V22" stroke="#d8d8d8"/></svg>
<svg style="position:absolute;left:1136px;top:123px;overflow:visible" width="24" height="24" viewBox="0 0 24 24"><path d="M3 4H21M3 9H21M3 14H21M3 19H21M8 2V22M16 2V22" stroke="#d8d8d8" stroke-width="1.3"/></svg>
<svg style="position:absolute;left:1169px;top:123px;overflow:visible" width="24" height="24" viewBox="0 0 24 24"><path d="M10 20V4L20 20Z" fill="none" stroke="#d8d8d8" stroke-width="1.5"/><path d="M4 16C2 10 5 4 12 3" fill="none" stroke="#d8d8d8" stroke-width="1.8"/><path d="M11 0L14 3L11 6" fill="none" stroke="#d8d8d8" stroke-width="1.8"/></svg>
<svg style="position:absolute;left:1231px;top:123px;overflow:visible" width="24" height="24" viewBox="0 0 24 24"><path d="M4 20L17 3L21 6L8 23Z" fill="#dcdcdc" stroke="#cfcfcf"/><path d="M4 20L3 24L8 23" fill="#d0d0d0"/></svg>
<svg style="position:absolute;left:1265px;top:123px;overflow:visible" width="24" height="24" viewBox="0 0 24 24"><path d="M4 19L17 2L21 5L8 22Z" fill="#f4d860" stroke="#b89a20"/><path d="M4 19L3 23L8 22Z" fill="#666"/></svg>
<svg style="position:absolute;left:1296px;top:123px;overflow:visible" width="24" height="24" viewBox="0 0 24 24"><rect x="2" y="2" width="17" height="18" rx="2" fill="#dcdcdc"/><rect x="5" y="3" width="11" height="6" fill="#f0f0f0"/><path d="M12 22L22 12L24 14L14 24Z" fill="#d0d0d0"/></svg>
<svg style="position:absolute;left:1330px;top:123px;overflow:visible" width="24" height="24" viewBox="0 0 24 24"><path d="M3 21L20 4" stroke="#d8d8d8" stroke-width="1.3" stroke-dasharray="2 2"/><rect x="1" y="19" width="4" height="4" fill="none" stroke="#d0d0d0"/><rect x="18" y="2" width="4" height="4" fill="none" stroke="#d0d0d0"/></svg>
<svg style="position:absolute;left:1374px;top:123px;overflow:visible" width="24" height="24" viewBox="0 0 24 24"><path d="M4 4C8 1 14 3 18 3C23 3 24 9 19 11C15 13 12 15 7 13C2 11 1 7 4 4Z" fill="#dcdcdc" stroke="#cfcfcf"/><rect x="13" y="13" width="10" height="10" rx="1.5" fill="#d4d4d4"/><circle cx="18.0" cy="18.0" r="2" fill="none" stroke="#f4f4f4" stroke-width="1.3"/></svg>
<svg style="position:absolute;left:1408px;top:123px;overflow:visible" width="24" height="24" viewBox="0 0 24 24"><path d="M3 3L9 12L4 22M9 12L20 5" fill="none" stroke="#d4d4d4" stroke-width="1.6"/><rect x="1" y="1" width="4" height="4" fill="none" stroke="#d0d0d0"/><path d="M11 14L21 24M21 14L11 24" stroke="#d4d4d4" stroke-width="2"/></svg>
<svg style="position:absolute;left:1452px;top:123px;overflow:visible" width="24" height="24" viewBox="0 0 24 24"><rect x="2" y="2" width="18" height="20" fill="#dcdcdc"/><path d="M5 7H17M5 11H17M5 15H17" stroke="#f4f4f4" stroke-width="1.5"/><path d="M12 20L22 6" stroke="#c8c8c8" stroke-width="2"/></svg>
<svg style="position:absolute;left:1485px;top:123px;overflow:visible" width="24" height="24" viewBox="0 0 24 24"><path d="M3 5H21M9 5V2H15V5" fill="none" stroke="#d4d4d4" stroke-width="1.8"/><path d="M5 7H19L18 23H6Z" fill="#dcdcdc"/><path d="M9 9V21M12 9V21M15 9V21" stroke="#f0f0f0"/></svg>
<svg style="position:absolute;left:1518px;top:123px;overflow:visible" width="24" height="24" viewBox="0 0 24 24"><path d="M5 2L14 16M19 2L10 16" stroke="#d4d4d4" stroke-width="2"/><circle cx="8" cy="19" r="3.5" fill="none" stroke="#d4d4d4" stroke-width="1.8"/><circle cx="16" cy="19" r="3.5" fill="none" stroke="#d4d4d4" stroke-width="1.8"/></svg>
<svg style="position:absolute;left:1552px;top:123px;overflow:visible" width="24" height="24" viewBox="0 0 24 24"><path d="M8 1H17L21 5V18H8Z" fill="#f4f4f4" stroke="#d4d4d4"/><path d="M3 6H12L16 10V23H3Z" fill="#f4f4f4" stroke="#d4d4d4"/><path d="M5 13H13M5 16H13M5 19H13" stroke="#d4d4d4"/></svg>
<svg style="position:absolute;left:1585px;top:123px;overflow:visible" width="24" height="24" viewBox="0 0 24 24"><rect x="3" y="3" width="17" height="20" fill="#f4f4f4" stroke="#d4d4d4"/><rect x="7" y="1" width="9" height="4" fill="#ddd"/><path d="M6 9H17M6 12H17M6 15H17M6 18H17" stroke="#d4d4d4"/></svg>
<svg style="position:absolute;left:1618px;top:123px;overflow:visible" width="24" height="24" viewBox="0 0 24 24"><path d="M8 4L2 10L8 16V12C14 12 18 13 21 19C21 11 16 7 8 7Z" fill="#d8d8d8"/></svg>
<svg style="position:absolute;left:1651px;top:123px;overflow:visible" width="24" height="24" viewBox="0 0 24 24"><path d="M16 4L22 10L16 16V12C10 12 6 13 3 19C3 11 8 7 16 7Z" fill="#d8d8d8"/></svg>
<svg style="position:absolute;left:1699px;top:123px;overflow:visible" width="24" height="24" viewBox="0 0 24 24"><path d="M3 22C3 12 8 4 18 3" fill="none" stroke="#d4d4d4" stroke-width="1.8"/><rect x="1" y="19" width="4" height="4" fill="none" stroke="#d0d0d0"/><rect x="16" y="1" width="4" height="4" fill="none" stroke="#d0d0d0"/><rect x="13" y="13" width="10" height="10" rx="1.5" fill="#d4d4d4"/><circle cx="18.0" cy="18.0" r="2" fill="none" stroke="#f4f4f4" stroke-width="1.3"/></svg>
<svg style="position:absolute;left:1731px;top:123px;overflow:visible" width="24" height="24" viewBox="0 0 24 24"><circle cx="10" cy="10" r="7.5" fill="none" stroke="#d4d4d4" stroke-width="2.2"/><circle cx="10" cy="10" r="2.5" fill="#d4d4d4"/><rect x="13" y="13" width="10" height="10" rx="1.5" fill="#d4d4d4"/><circle cx="18.0" cy="18.0" r="2" fill="none" stroke="#f4f4f4" stroke-width="1.3"/></svg>
<svg style="position:absolute;left:1775px;top:123px;overflow:visible" width="24" height="24" viewBox="0 0 24 24"><path d="M2 12C2 7 8 4 14 4C20 4 22 8 20 11C18 14 10 15 6 15C3 15 2 13 2 12Z" fill="none" stroke="#d4d4d4" stroke-width="2"/><rect x="13" y="13" width="10" height="10" rx="1.5" fill="#d4d4d4"/><circle cx="18.0" cy="18.0" r="2" fill="none" stroke="#f4f4f4" stroke-width="1.3"/></svg>
<svg style="position:absolute;left:1821px;top:123px;overflow:visible" width="24" height="24" viewBox="0 0 24 24"><rect x="2" y="3" width="17" height="14" fill="none" stroke="#d4d4d4" stroke-width="2.2"/><rect x="13" y="13" width="10" height="10" rx="1.5" fill="#d4d4d4"/><circle cx="18.0" cy="18.0" r="2" fill="none" stroke="#f4f4f4" stroke-width="1.3"/></svg>
<svg style="position:absolute;left:1867px;top:123px;overflow:visible" width="24" height="24" viewBox="0 0 24 24"><path d="M7 2L17 2L22 10L17 18L7 18L2 10Z" fill="none" stroke="#d4d4d4" stroke-width="2.2"/><rect x="13" y="13" width="10" height="10" rx="1.5" fill="#d4d4d4"/><circle cx="18.0" cy="18.0" r="2" fill="none" stroke="#f4f4f4" stroke-width="1.3"/></svg>
<svg style="position:absolute;left:499px;top:134px;" width="9" height="5" viewBox="0 0 9 5"><path d="M0 0H9L4.5 5Z" fill="#d4d4d4"/></svg>
<svg style="position:absolute;left:627px;top:134px;" width="9" height="5" viewBox="0 0 9 5"><path d="M0 0H9L4.5 5Z" fill="#d4d4d4"/></svg>
<svg style="position:absolute;left:1198px;top:134px;" width="9" height="5" viewBox="0 0 9 5"><path d="M0 0H9L4.5 5Z" fill="#d4d4d4"/></svg>
<svg style="position:absolute;left:1359px;top:134px;" width="9" height="5" viewBox="0 0 9 5"><path d="M0 0H9L4.5 5Z" fill="#d4d4d4"/></svg>
<svg style="position:absolute;left:1437px;top:134px;" width="9" height="5" viewBox="0 0 9 5"><path d="M0 0H9L4.5 5Z" fill="#d4d4d4"/></svg>
<svg style="position:absolute;left:1762px;top:134px;" width="9" height="5" viewBox="0 0 9 5"><path d="M0 0H9L4.5 5Z" fill="#d4d4d4"/></svg>
<svg style="position:absolute;left:1808px;top:134px;" width="9" height="5" viewBox="0 0 9 5"><path d="M0 0H9L4.5 5Z" fill="#d4d4d4"/></svg>
<svg style="position:absolute;left:1852px;top:134px;" width="9" height="5" viewBox="0 0 9 5"><path d="M0 0H9L4.5 5Z" fill="#d4d4d4"/></svg>
<svg style="position:absolute;left:1896px;top:134px;" width="9" height="5" viewBox="0 0 9 5"><path d="M0 0H9L4.5 5Z" fill="#d4d4d4"/></svg>
<svg style="position:absolute;left:20px;top:167px;" width="5" height="16" viewBox="0 0 5 16"><circle cx="1" cy="1" r="0.65" fill="#c2c2c2"/><circle cx="4" cy="1" r="0.65" fill="#c2c2c2"/><circle cx="1" cy="4" r="0.65" fill="#c2c2c2"/><circle cx="4" cy="4" r="0.65" fill="#c2c2c2"/><circle cx="1" cy="7" r="0.65" fill="#c2c2c2"/><circle cx="4" cy="7" r="0.65" fill="#c2c2c2"/><circle cx="1" cy="10" r="0.65" fill="#c2c2c2"/><circle cx="4" cy="10" r="0.65" fill="#c2c2c2"/><circle cx="1" cy="13" r="0.65" fill="#c2c2c2"/><circle cx="4" cy="13" r="0.65" fill="#c2c2c2"/></svg>
<svg style="position:absolute;left:636px;top:167px;" width="5" height="16" viewBox="0 0 5 16"><circle cx="1" cy="1" r="0.65" fill="#c2c2c2"/><circle cx="4" cy="1" r="0.65" fill="#c2c2c2"/><circle cx="1" cy="4" r="0.65" fill="#c2c2c2"/><circle cx="4" cy="4" r="0.65" fill="#c2c2c2"/><circle cx="1" cy="7" r="0.65" fill="#c2c2c2"/><circle cx="4" cy="7" r="0.65" fill="#c2c2c2"/><circle cx="1" cy="10" r="0.65" fill="#c2c2c2"/><circle cx="4" cy="10" r="0.65" fill="#c2c2c2"/><circle cx="1" cy="13" r="0.65" fill="#c2c2c2"/><circle cx="4" cy="13" r="0.65" fill="#c2c2c2"/></svg>
<svg style="position:absolute;left:891px;top:167px;" width="5" height="16" viewBox="0 0 5 16"><circle cx="1" cy="1" r="0.65" fill="#c2c2c2"/><circle cx="4" cy="1" r="0.65" fill="#c2c2c2"/><circle cx="1" cy="4" r="0.65" fill="#c2c2c2"/><circle cx="4" cy="4" r="0.65" fill="#c2c2c2"/><circle cx="1" cy="7" r="0.65" fill="#c2c2c2"/><circle cx="4" cy="7" r="0.65" fill="#c2c2c2"/><circle cx="1" cy="10" r="0.65" fill="#c2c2c2"/><circle cx="4" cy="10" r="0.65" fill="#c2c2c2"/><circle cx="1" cy="13" r="0.65" fill="#c2c2c2"/><circle cx="4" cy="13" r="0.65" fill="#c2c2c2"/></svg>
<svg style="position:absolute;left:939px;top:167px;" width="5" height="16" viewBox="0 0 5 16"><circle cx="1" cy="1" r="0.65" fill="#c2c2c2"/><circle cx="4" cy="1" r="0.65" fill="#c2c2c2"/><circle cx="1" cy="4" r="0.65" fill="#c2c2c2"/><circle cx="4" cy="4" r="0.65" fill="#c2c2c2"/><circle cx="1" cy="7" r="0.65" fill="#c2c2c2"/><circle cx="4" cy="7" r="0.65" fill="#c2c2c2"/><circle cx="1" cy="10" r="0.65" fill="#c2c2c2"/><circle cx="4" cy="10" r="0.65" fill="#c2c2c2"/><circle cx="1" cy="13" r="0.65" fill="#c2c2c2"/><circle cx="4" cy="13" r="0.65" fill="#c2c2c2"/></svg>
<svg style="position:absolute;left:1022px;top:167px;" width="5" height="16" viewBox="0 0 5 16"><circle cx="1" cy="1" r="0.65" fill="#c2c2c2"/><circle cx="4" cy="1" r="0.65" fill="#c2c2c2"/><circle cx="1" cy="4" r="0.65" fill="#c2c2c2"/><circle cx="4" cy="4" r="0.65" fill="#c2c2c2"/><circle cx="1" cy="7" r="0.65" fill="#c2c2c2"/><circle cx="4" cy="7" r="0.65" fill="#c2c2c2"/><circle cx="1" cy="10" r="0.65" fill="#c2c2c2"/><circle cx="4" cy="10" r="0.65" fill="#c2c2c2"/><circle cx="1" cy="13" r="0.65" fill="#c2c2c2"/><circle cx="4" cy="13" r="0.65" fill="#c2c2c2"/></svg>
<svg style="position:absolute;left:1204px;top:167px;" width="5" height="16" viewBox="0 0 5 16"><circle cx="1" cy="1" r="0.65" fill="#c2c2c2"/><circle cx="4" cy="1" r="0.65" fill="#c2c2c2"/><circle cx="1" cy="4" r="0.65" fill="#c2c2c2"/><circle cx="4" cy="4" r="0.65" fill="#c2c2c2"/><circle cx="1" cy="7" r="0.65" fill="#c2c2c2"/><circle cx="4" cy="7" r="0.65" fill="#c2c2c2"/><circle cx="1" cy="10" r="0.65" fill="#c2c2c2"/><circle cx="4" cy="10" r="0.65" fill="#c2c2c2"/><circle cx="1" cy="13" r="0.65" fill="#c2c2c2"/><circle cx="4" cy="13" r="0.65" fill="#c2c2c2"/></svg>
<svg style="position:absolute;left:31px;top:163px;overflow:visible" width="24" height="24" viewBox="0 0 24 24"><path d="M5 2L12 9L19 2L22 5L15 12L22 19L19 22L12 15L5 22L2 19L9 12L2 5Z" fill="none" stroke="#d0d0d0" stroke-width="1.5"/></svg>
<div style="left:64px;top:160px;width:172px;height:31px;background:#f6f6f6;border:1px solid #cfcfcf;border-radius:2px"></div>
<span style="left:69px;top:168.9px;font:normal 16px 'Liberation Sans';line-height:16px;color:#b4b4b4;letter-spacing:0.452px;">No filter geometry set</span>
<div style="left:242px;top:160px;width:32px;height:31px;background:#dcdcdc;border:1px solid #c2c2c2;border-radius:3px"></div>
<svg style="position:absolute;left:246px;top:164px;overflow:visible" width="24" height="24" viewBox="0 0 24 24"><path d="M1 12Q12 2 23 12Q12 22 1 12Z" fill="#e8e8e8" stroke="#bbb"/><circle cx="12" cy="12" r="4" fill="#a8a8a8"/><circle cx="12" cy="12" r="1.6" fill="#777"/></svg>
<svg style="position:absolute;left:283px;top:163px;overflow:visible" width="24" height="24" viewBox="0 0 24 24"><rect x="2" y="2" width="10" height="12" fill="none" stroke="#ccc" stroke-dasharray="2 2"/><circle cx="14" cy="10" r="7.5" fill="#f6f6f6" stroke="#d0d0d0" stroke-width="1.3"/><path d="M3 22L9 16" stroke="#d0d0d0" stroke-width="3"/></svg>
<div style="left:322px;top:168px;width:25px;height:16px;background:#0000f0;border:1px solid #222"></div>
<svg style="position:absolute;left:355px;top:174px;" width="9" height="5" viewBox="0 0 9 5"><path d="M0 0H9L4.5 5Z" fill="#444"/></svg>
<div style="left:375px;top:164px;width:1px;height:22px;background:#d0d0d0"></div>
<svg style="position:absolute;left:387px;top:163px;overflow:visible" width="24" height="24" viewBox="0 0 24 24"><rect x="1" y="2" width="17" height="17" fill="#cfe6f8" stroke="#6a9ac8"/><rect x="13" y="13" width="11" height="11" rx="1.5" fill="#5a9a55"/><path d="M18.5 15V22M15 18.5H22" stroke="#fff" stroke-width="2"/></svg>
<svg style="position:absolute;left:424px;top:163px;overflow:visible" width="24" height="24" viewBox="0 0 24 24"><circle cx="8" cy="7.5" r="6.5" fill="#6a94c8" stroke="#3a5a8a"/><circle cx="6.5" cy="19.5" r="4" fill="#2a4a70"/><circle cx="17" cy="15.5" r="4" fill="#2a4a70"/><path d="M17.5 2L19.5 4L17.5 6L15.5 4Z" fill="#cfe0f4" stroke="#6a94c8"/><rect x="13" y="13" width="11" height="11" rx="1.5" fill="#5a9a55"/><path d="M18.5 15V22M15 18.5H22" stroke="#fff" stroke-width="2"/></svg>
<svg style="position:absolute;left:460px;top:163px;overflow:visible" width="24" height="24" viewBox="0 0 24 24"><path d="M3 2H18L9 19L3 13Z" fill="none" stroke="#222" stroke-width="1.3"/><circle cx="3" cy="2.5" r="2.3" fill="#3a7ae0"/><circle cx="18" cy="2.5" r="2.3" fill="#3a7ae0"/><circle cx="9" cy="19" r="2.3" fill="#3a7ae0"/><circle cx="2.5" cy="13" r="2.3" fill="#3a7ae0"/><rect x="13" y="13" width="11" height="11" rx="1.5" fill="#5a9a55"/><path d="M18.5 15V22M15 18.5H22" stroke="#fff" stroke-width="2"/></svg>
<svg style="position:absolute;left:514px;top:163px;overflow:visible" width="24" height="24" viewBox="0 0 24 24"><path d="M4 2C2 4 2 7 4 9C6 11 8 10 9 10L20 22L22 20L11 9C12 7 11 4 9 3L7 5L5 3Z" fill="#e8e8e8" stroke="#ccc"/></svg>
<svg style="position:absolute;left:561px;top:163px;overflow:visible" width="24" height="24" viewBox="0 0 24 24"><rect x="2" y="2" width="5" height="5" fill="none" stroke="#d0d0d0"/><rect x="2" y="10" width="5" height="5" fill="none" stroke="#d0d0d0"/><rect x="2" y="18" width="5" height="5" fill="none" stroke="#d0d0d0"/><path d="M10 4H22M10 12H22M10 20H18" stroke="#dcdcdc" stroke-width="2"/></svg>
<svg style="position:absolute;left:597px;top:163px;overflow:visible" width="24" height="24" viewBox="0 0 24 24"><rect x="1" y="1" width="22" height="22" fill="#fafafa" stroke="#777"/><rect x="1" y="1" width="22" height="4" fill="#ddd" stroke="#777"/><rect x="5" y="8" width="4" height="4" fill="#3a6ab0"/><rect x="8" y="15" width="4" height="4" fill="#3a6ab0"/><path d="M11 10H20M14 17H20M6 12V17H8" stroke="#888"/></svg>
<svg style="position:absolute;left:646px;top:163px;overflow:visible" width="24" height="24" viewBox="0 0 24 24"><path d="M1 4H22M20 4C18 12 12 18 4 23" fill="none" stroke="#333" stroke-width="1.4"/></svg>
<svg style="position:absolute;left:679px;top:163px;overflow:visible" width="24" height="24" viewBox="0 0 24 24"><path d="M2 3H12" stroke="#555" stroke-width="1.6"/><path d="M12 3H22" stroke="#e04060" stroke-width="1.6"/><path d="M2 12H8" stroke="#40b060" stroke-width="1.6"/><path d="M8 12H15" stroke="#40c0e0" stroke-width="1.6"/><path d="M15 12H22" stroke="#e040c0" stroke-width="1.6"/><path d="M2 21H12" stroke="#d0a0e0" stroke-width="1.6"/><path d="M12 21H22" stroke="#f0c080" stroke-width="1.6"/></svg>
<svg style="position:absolute;left:712px;top:163px;overflow:visible" width="24" height="24" viewBox="0 0 24 24"><path d="M1 3H22" stroke="#333" stroke-width="1.4"/><path d="M17 3C15 12 10 18 5 23" fill="none" stroke="#e02020" stroke-width="1.4"/><circle cx="16" cy="7" r="1.6" fill="#e02020"/><circle cx="12" cy="14" r="1.6" fill="#e02020"/><circle cx="6" cy="21" r="1.6" fill="#e02020"/></svg>
<svg style="position:absolute;left:745px;top:163px;overflow:visible" width="24" height="24" viewBox="0 0 24 24"><path d="M2 3H23M8 3L3 22M15 3L10 22M22 3L17 22" fill="none" stroke="#222" stroke-width="1.4"/></svg>
<svg style="position:absolute;left:786px;top:163px;overflow:visible" width="24" height="24" viewBox="0 0 24 24"><path d="M2 11C2 6 5 5 9 5H15V1L23 7L15 13V9H9C6 9 5 10 5 12Z" fill="#f0901a"/><path d="M22 13C22 18 19 19 15 19H9V23L1 17L9 11V15H15C18 15 19 14 19 12Z" fill="#3ab03a"/></svg>
<svg style="position:absolute;left:819px;top:163px;overflow:visible" width="24" height="24" viewBox="0 0 24 24"><rect x="1" y="1" width="9" height="22" fill="#fff" stroke="#444"/><path d="M10 1H16V5H10ZM16 5H22V9H16ZM10 9H16V13H10ZM16 13H22V17H16ZM10 17H16V21H10Z" fill="#222"/><path d="M5 9L12 12L5 15" fill="none" stroke="#e01818" stroke-width="2"/></svg>
<svg style="position:absolute;left:852px;top:163px;overflow:visible" width="24" height="24" viewBox="0 0 24 24"><rect x="1" y="1" width="9" height="22" fill="#111"/><path d="M10 1H16V5H10ZM16 5H22V9H16ZM10 9H16V13H10ZM16 13H22V17H16ZM10 17H16V21H10Z" fill="#222"/><path d="M5 9L12 12L5 15" fill="none" stroke="#e01818" stroke-width="2"/></svg>
<svg style="position:absolute;left:901px;top:163px;overflow:visible" width="24" height="24" viewBox="0 0 24 24"><circle cx="12" cy="6" r="4" fill="none" stroke="#7aa030" stroke-width="2.2"/><path d="M14 8L16 10" stroke="#7aa030" stroke-width="2"/><text x="0" y="23" font-family="Liberation Sans" font-weight="bold" font-size="12" fill="#7aa030">hub</text></svg>
<svg style="position:absolute;left:949px;top:163px;overflow:visible" width="24" height="24" viewBox="0 0 24 24"><rect x="0" y="0" width="24" height="24" fill="#4aa84a"/><circle cx="14" cy="10" r="6.5" fill="none" stroke="#fff" stroke-width="2"/><path d="M3 22L9.5 15" stroke="#fff" stroke-width="2.5"/></svg>
<svg style="position:absolute;left:982px;top:163px;overflow:visible" width="24" height="24" viewBox="0 0 24 24"><rect x="1" y="1" width="22" height="22" fill="#f0d860"/><path d="M1 14L8 10L12 16L20 12L23 14" fill="none" stroke="#4a90d0" stroke-width="2"/><path d="M3 4L9 8L6 20M14 3L18 10" stroke="#e07030" stroke-width="1.5"/><path d="M12 14L22 2" stroke="#5a3a1a" stroke-width="3"/></svg>
<svg style="position:absolute;left:1032px;top:163px;overflow:visible" width="24" height="24" viewBox="0 0 24 24"><rect x="0" y="2" width="24" height="15" rx="3" fill="#4a86c8"/><text x="2" y="13.5" font-family="Liberation Sans" font-weight="bold" font-size="8.5" fill="#fff">KML</text><rect x="14" y="14" width="10" height="10" rx="1.5" fill="#5a9a55"/><path d="M19.0 16V22M16 19.0H22" stroke="#fff" stroke-width="2"/></svg>
<svg style="position:absolute;left:1065px;top:163px;overflow:visible" width="24" height="24" viewBox="0 0 24 24"><rect x="0" y="2" width="24" height="15" rx="3" fill="#4a86c8"/><text x="2" y="13.5" font-family="Liberation Sans" font-weight="bold" font-size="8.5" fill="#fff">KMZ</text><rect x="14" y="14" width="10" height="10" rx="1.5" fill="#555"/><path d="M16 19H22M19.5 16.5L22 19L19.5 21.5" fill="none" stroke="#fff" stroke-width="1.3"/></svg>
<svg style="position:absolute;left:1098px;top:163px;overflow:visible" width="24" height="24" viewBox="0 0 24 24"><rect x="0" y="2" width="24" height="15" rx="3" fill="#4a86c8"/><text x="0.5" y="13" font-family="Liberation Sans" font-weight="bold" font-size="7" fill="#fff">HTML</text><rect x="14" y="14" width="10" height="10" rx="1.5" fill="#e0b820" stroke="#c09a10" stroke-width="0.6"/><path d="M19.0 15.8V22.2M15.8 19.0H22.2M16.76 16.76L21.24 21.24M21.24 16.76L16.76 21.24" stroke="#fff" stroke-width="1.3"/><circle cx="19.0" cy="19.0" r="1.3" fill="#e0b820"/></svg>
<svg style="position:absolute;left:1131px;top:163px;overflow:visible" width="24" height="24" viewBox="0 0 24 24"><rect x="1" y="1" width="10" height="10" fill="#3a8a3a"/><rect x="13" y="1" width="10" height="10" fill="#e8c830"/><rect x="1" y="13" width="10" height="10" fill="#2a6a9a"/><rect x="13" y="13" width="10" height="10" fill="#3a8a3a"/><rect x="7" y="7" width="10" height="10" fill="#9a6a3a"/></svg>
<svg style="position:absolute;left:1164px;top:163px;overflow:visible" width="24" height="24" viewBox="0 0 24 24"><path d="M2 2L22 1L23 22L1 23Z" fill="#bfe0a0" stroke="#444"/><path d="M2 8H22M2 15H22M8 2V22M15 2V22" stroke="#fff" stroke-width="1.2"/><path d="M4 20L20 4" stroke="#888"/></svg>
<svg style="position:absolute;left:540px;top:174px;" width="9" height="5" viewBox="0 0 9 5"><path d="M0 0H9L4.5 5Z" fill="#d4d4d4"/></svg>
<div style="left:497px;top:164px;width:1px;height:22px;background:#d0d0d0"></div>
<div style="left:779px;top:164px;width:1px;height:22px;background:#d0d0d0"></div>
<svg style="position:absolute;left:20px;top:1014px;" width="5" height="16" viewBox="0 0 5 16"><circle cx="1" cy="1" r="0.65" fill="#c2c2c2"/><circle cx="4" cy="1" r="0.65" fill="#c2c2c2"/><circle cx="1" cy="4" r="0.65" fill="#c2c2c2"/><circle cx="4" cy="4" r="0.65" fill="#c2c2c2"/><circle cx="1" cy="7" r="0.65" fill="#c2c2c2"/><circle cx="4" cy="7" r="0.65" fill="#c2c2c2"/><circle cx="1" cy="10" r="0.65" fill="#c2c2c2"/><circle cx="4" cy="10" r="0.65" fill="#c2c2c2"/><circle cx="1" cy="13" r="0.65" fill="#c2c2c2"/><circle cx="4" cy="13" r="0.65" fill="#c2c2c2"/></svg>
<svg style="position:absolute;left:135px;top:1014px;" width="5" height="16" viewBox="0 0 5 16"><circle cx="1" cy="1" r="0.65" fill="#c2c2c2"/><circle cx="4" cy="1" r="0.65" fill="#c2c2c2"/><circle cx="1" cy="4" r="0.65" fill="#c2c2c2"/><circle cx="4" cy="4" r="0.65" fill="#c2c2c2"/><circle cx="1" cy="7" r="0.65" fill="#c2c2c2"/><circle cx="4" cy="7" r="0.65" fill="#c2c2c2"/><circle cx="1" cy="10" r="0.65" fill="#c2c2c2"/><circle cx="4" cy="10" r="0.65" fill="#c2c2c2"/><circle cx="1" cy="13" r="0.65" fill="#c2c2c2"/><circle cx="4" cy="13" r="0.65" fill="#c2c2c2"/></svg>
<svg style="position:absolute;left:459px;top:1014px;" width="5" height="16" viewBox="0 0 5 16"><circle cx="1" cy="1" r="0.65" fill="#c2c2c2"/><circle cx="4" cy="1" r="0.65" fill="#c2c2c2"/><circle cx="1" cy="4" r="0.65" fill="#c2c2c2"/><circle cx="4" cy="4" r="0.65" fill="#c2c2c2"/><circle cx="1" cy="7" r="0.65" fill="#c2c2c2"/><circle cx="4" cy="7" r="0.65" fill="#c2c2c2"/><circle cx="1" cy="10" r="0.65" fill="#c2c2c2"/><circle cx="4" cy="10" r="0.65" fill="#c2c2c2"/><circle cx="1" cy="13" r="0.65" fill="#c2c2c2"/><circle cx="4" cy="13" r="0.65" fill="#c2c2c2"/></svg>
<svg style="position:absolute;left:508px;top:1014px;" width="5" height="16" viewBox="0 0 5 16"><circle cx="1" cy="1" r="0.65" fill="#c2c2c2"/><circle cx="4" cy="1" r="0.65" fill="#c2c2c2"/><circle cx="1" cy="4" r="0.65" fill="#c2c2c2"/><circle cx="4" cy="4" r="0.65" fill="#c2c2c2"/><circle cx="1" cy="7" r="0.65" fill="#c2c2c2"/><circle cx="4" cy="7" r="0.65" fill="#c2c2c2"/><circle cx="1" cy="10" r="0.65" fill="#c2c2c2"/><circle cx="4" cy="10" r="0.65" fill="#c2c2c2"/><circle cx="1" cy="13" r="0.65" fill="#c2c2c2"/><circle cx="4" cy="13" r="0.65" fill="#c2c2c2"/></svg>
<svg style="position:absolute;left:558px;top:1014px;" width="5" height="16" viewBox="0 0 5 16"><circle cx="1" cy="1" r="0.65" fill="#c2c2c2"/><circle cx="4" cy="1" r="0.65" fill="#c2c2c2"/><circle cx="1" cy="4" r="0.65" fill="#c2c2c2"/><circle cx="4" cy="4" r="0.65" fill="#c2c2c2"/><circle cx="1" cy="7" r="0.65" fill="#c2c2c2"/><circle cx="4" cy="7" r="0.65" fill="#c2c2c2"/><circle cx="1" cy="10" r="0.65" fill="#c2c2c2"/><circle cx="4" cy="10" r="0.65" fill="#c2c2c2"/><circle cx="1" cy="13" r="0.65" fill="#c2c2c2"/><circle cx="4" cy="13" r="0.65" fill="#c2c2c2"/></svg>
<svg style="position:absolute;left:574px;top:1014px;" width="5" height="16" viewBox="0 0 5 16"><circle cx="1" cy="1" r="0.65" fill="#c2c2c2"/><circle cx="4" cy="1" r="0.65" fill="#c2c2c2"/><circle cx="1" cy="4" r="0.65" fill="#c2c2c2"/><circle cx="4" cy="4" r="0.65" fill="#c2c2c2"/><circle cx="1" cy="7" r="0.65" fill="#c2c2c2"/><circle cx="4" cy="7" r="0.65" fill="#c2c2c2"/><circle cx="1" cy="10" r="0.65" fill="#c2c2c2"/><circle cx="4" cy="10" r="0.65" fill="#c2c2c2"/><circle cx="1" cy="13" r="0.65" fill="#c2c2c2"/><circle cx="4" cy="13" r="0.65" fill="#c2c2c2"/></svg>
<svg style="position:absolute;left:1631px;top:1014px;" width="5" height="16" viewBox="0 0 5 16"><circle cx="1" cy="1" r="0.65" fill="#c2c2c2"/><circle cx="4" cy="1" r="0.65" fill="#c2c2c2"/><circle cx="1" cy="4" r="0.65" fill="#c2c2c2"/><circle cx="4" cy="4" r="0.65" fill="#c2c2c2"/><circle cx="1" cy="7" r="0.65" fill="#c2c2c2"/><circle cx="4" cy="7" r="0.65" fill="#c2c2c2"/><circle cx="1" cy="10" r="0.65" fill="#c2c2c2"/><circle cx="4" cy="10" r="0.65" fill="#c2c2c2"/><circle cx="1" cy="13" r="0.65" fill="#c2c2c2"/><circle cx="4" cy="13" r="0.65" fill="#c2c2c2"/></svg>
<svg style="position:absolute;left:1681px;top:1014px;" width="5" height="16" viewBox="0 0 5 16"><circle cx="1" cy="1" r="0.65" fill="#c2c2c2"/><circle cx="4" cy="1" r="0.65" fill="#c2c2c2"/><circle cx="1" cy="4" r="0.65" fill="#c2c2c2"/><circle cx="4" cy="4" r="0.65" fill="#c2c2c2"/><circle cx="1" cy="7" r="0.65" fill="#c2c2c2"/><circle cx="4" cy="7" r="0.65" fill="#c2c2c2"/><circle cx="1" cy="10" r="0.65" fill="#c2c2c2"/><circle cx="4" cy="10" r="0.65" fill="#c2c2c2"/><circle cx="1" cy="13" r="0.65" fill="#c2c2c2"/><circle cx="4" cy="13" r="0.65" fill="#c2c2c2"/></svg>
<svg style="position:absolute;left:31px;top:1011px;overflow:visible" width="24" height="24" viewBox="0 0 24 24"><path d="M12 2L23 21H1Z" fill="#7ab030"/><path d="M12 8L17.5 18H6.5Z" fill="#f6f6f6"/><rect x="1" y="21" width="22" height="2" fill="#f09030"/></svg>
<svg style="position:absolute;left:65px;top:1011px;overflow:visible" width="24" height="24" viewBox="0 0 24 24"><rect x="1" y="1" width="20" height="20" fill="#3a5a2a"/><text x="4" y="18" font-family="Liberation Serif" font-weight="bold" font-size="18" fill="#fff">F</text><rect x="13" y="13" width="11" height="11" rx="1.5" fill="#5a7a9a"/><path d="M15 18.5H22M19.5 16L22 18.5L19.5 21" fill="none" stroke="#fff" stroke-width="1.3"/></svg>
<svg style="position:absolute;left:97px;top:1011px;overflow:visible" width="24" height="24" viewBox="0 0 24 24"><circle cx="12" cy="10" r="10" fill="#8ab0e0" stroke="#4a70a0"/><path d="M2 10H22M12 0V20M5 4Q12 8 19 4M5 16Q12 12 19 16" fill="none" stroke="#fff" stroke-width="0.8"/><circle cx="7" cy="19" r="4.5" fill="#111"/><circle cx="17" cy="19" r="4.5" fill="#111"/><circle cx="7" cy="19" r="2" fill="#fff"/><circle cx="17" cy="19" r="2" fill="#fff"/></svg>
<svg style="position:absolute;left:147px;top:1011px;overflow:visible" width="24" height="24" viewBox="0 0 24 24"><path d="M11 1C6 1 6 3 6 5V8H12V9H4C1 9 1 12 1 14C1 17 3 18 5 18H7V15C7 13 8 12 10 12H15C17 12 18 11 18 9V5C18 3 16 1 11 1Z" fill="#3a70b0"/><path d="M13 23C18 23 18 21 18 19V16H12V15H20C23 15 23 12 23 10C23 7 21 6 19 6H17V9C17 11 16 12 14 12H9C7 12 6 13 6 15V19C6 21 8 23 13 23Z" fill="#f0c830"/><path d="M18 19L22 21L18 23" fill="none" stroke="#555"/></svg>
<svg style="position:absolute;left:178px;top:1011px;overflow:visible" width="24" height="24" viewBox="0 0 24 24"><rect x="1" y="1" width="22" height="22" fill="#444"/><rect x="2" y="2" width="6" height="6" fill="#5a9aaa"/><rect x="9" y="2" width="6" height="6" fill="#3a6a7a"/><rect x="16" y="2" width="6" height="6" fill="#2a3a4a"/><rect x="2" y="9" width="6" height="6" fill="#a8c8d0"/><rect x="9" y="9" width="6" height="6" fill="#a08890"/><rect x="16" y="9" width="6" height="6" fill="#703040"/><rect x="2" y="16" width="6" height="6" fill="#e8e8e8"/><rect x="9" y="16" width="6" height="6" fill="#e0b0b8"/><rect x="16" y="16" width="6" height="6" fill="#c03040"/></svg>
<svg style="position:absolute;left:212px;top:1011px;overflow:visible" width="24" height="24" viewBox="0 0 24 24"><path d="M2 1V22H23" fill="none" stroke="#555" stroke-width="1.2"/><path d="M4 19C10 19 12 8 20 4" fill="none" stroke="#e040c0" stroke-width="1.6"/><path d="M4 20C10 20 12 14 20 12" fill="none" stroke="#40b0d0" stroke-width="1.4"/></svg>
<svg style="position:absolute;left:257px;top:1011px;overflow:visible" width="24" height="24" viewBox="0 0 24 24"><circle cx="9" cy="9" r="8.5" fill="#1a8a2a"/><text x="6.5" y="14" font-family="Liberation Serif" font-style="italic" font-weight="bold" font-size="12" fill="#fff">i</text><path d="M12 11L12 23L15 20L18 24L20 23L17 19H21Z" fill="#fff" stroke="#555" stroke-width="1"/></svg>
<svg style="position:absolute;left:290px;top:1011px;overflow:visible" width="24" height="24" viewBox="0 0 24 24"><path d="M2 2V22H22" fill="none" stroke="#111" stroke-width="1.6"/><path d="M2 2H22V20" fill="none" stroke="#111" stroke-dasharray="1.5 1.5"/><path d="M3 21L21 3" stroke="#1a3ae0" stroke-width="2"/><path d="M16 3H21V8" fill="none" stroke="#1a3ae0" stroke-width="2"/><path d="M2 22L8 14L14 22Z" fill="#f4e060" opacity="0.7"/></svg>
<svg style="position:absolute;left:323px;top:1011px;overflow:visible" width="24" height="24" viewBox="0 0 24 24"><path d="M1 22V14C5 8 9 8 14 13C17 16 20 17 23 19V22Z" fill="#10d020" stroke="#222"/><circle cx="19" cy="4" r="3" fill="#f6f060"/></svg>
<svg style="position:absolute;left:356px;top:1011px;overflow:visible" width="24" height="24" viewBox="0 0 24 24"><circle cx="12" cy="12" r="11" fill="#1a2a5a"/><circle cx="12" cy="12" r="8" fill="#2a5aa0"/><path d="M6 10C8 7 11 8 12 11C13 14 10 16 8 15Z" fill="#5a9a5a"/><path d="M14 14C16 13 18 15 17 18Z" fill="#5a9a5a"/></svg>
<svg style="position:absolute;left:389px;top:1011px;overflow:visible" width="24" height="24" viewBox="0 0 24 24"><rect x="0" y="0" width="24" height="24" fill="#6a6a6a"/><path d="M3 17L12 4L21 16L13 14Z" fill="#f0c020"/><path d="M1 18C6 16 12 15 20 17" stroke="#333" stroke-width="2"/></svg>
<svg style="position:absolute;left:422px;top:1011px;overflow:visible" width="24" height="24" viewBox="0 0 24 24"><path d="M1 14L12 20L23 14L12 8Z" fill="#a8c0b8" stroke="#789088"/><path d="M1 10L12 16L23 10L12 4Z" fill="#c8e0c0" stroke="#90b090"/><path d="M10 10C12 4 17 2 20 3C20 7 17 12 10 10Z" fill="#8ac860"/></svg>
<svg style="position:absolute;left:473px;top:1011px;overflow:visible" width="24" height="24" viewBox="0 0 24 24"><rect x="1" y="1" width="15" height="15" fill="#fff" stroke="#a0c8e0"/><rect x="4" y="4" width="15" height="15" fill="#fff" stroke="#80b0d0"/><rect x="7" y="7" width="15" height="15" fill="#fff" stroke="#4a90c0"/><circle cx="14.5" cy="14.5" r="4" fill="none" stroke="#3aa0b0" stroke-width="1.3"/></svg>
<svg style="position:absolute;left:519px;top:1011px;overflow:visible" width="24" height="24" viewBox="0 0 24 24"><rect x="1" y="2" width="22" height="17" fill="#fff" stroke="#888"/><path d="M1 6H23M1 10H23M1 14H23M6 2V19M12 2V19M18 2V19" stroke="#9ac89a" stroke-width="0.8"/><rect x="13" y="13" width="11" height="11" rx="1.5" fill="#2a9a3a"/><path d="M18.5 15V22M15 18.5H22" stroke="#fff" stroke-width="2"/></svg>
<svg style="position:absolute;left:586px;top:1011px;overflow:visible" width="24" height="24" viewBox="0 0 24 24"><circle cx="12" cy="12" r="11.5" fill="#4aaa4a"/><circle cx="8" cy="12" r="2.3" fill="#fff"/><circle cx="16" cy="7.5" r="2.3" fill="#fff"/><circle cx="16" cy="16.5" r="2.3" fill="#fff"/><path d="M8 12L16 7.5M8 12L16 16.5" stroke="#fff" stroke-width="1.4"/></svg>
<svg style="position:absolute;left:1643px;top:1011px;overflow:visible" width="24" height="24" viewBox="0 0 24 24"><circle cx="12" cy="12" r="11.5" fill="#111"/><circle cx="12" cy="12" r="10" fill="#fff"/><path d="M4 12H22A10 10 0 0 1 2 12Z" fill="#d02030"/><path d="M7 4A10 10 0 0 1 22 12H7Z" fill="#2040a0"/><circle cx="8" cy="11" r="4" fill="none" stroke="#111"/></svg>
<svg style="position:absolute;left:1692px;top:1011px;overflow:visible" width="24" height="24" viewBox="0 0 24 24"><circle cx="11" cy="13" r="10.5" fill="#5a86d0"/><path d="M4 10C8 8 12 14 18 11M6 16C10 14 12 18 16 16" fill="none" stroke="#a8c8f0" stroke-width="1.2"/><circle cx="19" cy="6" r="4" fill="#c8e4f8"/></svg>
<svg style="position:absolute;left:240px;top:1021px;" width="9" height="5" viewBox="0 0 9 5"><path d="M0 0H9L4.5 5Z" fill="#555"/></svg>
<svg style="position:absolute;left:24px;top:200px;" width="18" height="4" viewBox="0 0 18 4"><circle cx="1" cy="1" r="0.8" fill="#bdbdbd"/><circle cx="1" cy="3" r="0.8" fill="#bdbdbd"/><circle cx="4" cy="1" r="0.8" fill="#bdbdbd"/><circle cx="4" cy="3" r="0.8" fill="#bdbdbd"/><circle cx="7" cy="1" r="0.8" fill="#bdbdbd"/><circle cx="7" cy="3" r="0.8" fill="#bdbdbd"/><circle cx="10" cy="1" r="0.8" fill="#bdbdbd"/><circle cx="10" cy="3" r="0.8" fill="#bdbdbd"/><circle cx="13" cy="1" r="0.8" fill="#bdbdbd"/><circle cx="13" cy="3" r="0.8" fill="#bdbdbd"/><circle cx="16" cy="1" r="0.8" fill="#bdbdbd"/><circle cx="16" cy="3" r="0.8" fill="#bdbdbd"/></svg>
<svg style="position:absolute;left:24px;top:441px;" width="18" height="4" viewBox="0 0 18 4"><circle cx="1" cy="1" r="0.8" fill="#bdbdbd"/><circle cx="1" cy="3" r="0.8" fill="#bdbdbd"/><circle cx="4" cy="1" r="0.8" fill="#bdbdbd"/><circle cx="4" cy="3" r="0.8" fill="#bdbdbd"/><circle cx="7" cy="1" r="0.8" fill="#bdbdbd"/><circle cx="7" cy="3" r="0.8" fill="#bdbdbd"/><circle cx="10" cy="1" r="0.8" fill="#bdbdbd"/><circle cx="10" cy="3" r="0.8" fill="#bdbdbd"/><circle cx="13" cy="1" r="0.8" fill="#bdbdbd"/><circle cx="13" cy="3" r="0.8" fill="#bdbdbd"/><circle cx="16" cy="1" r="0.8" fill="#bdbdbd"/><circle cx="16" cy="3" r="0.8" fill="#bdbdbd"/></svg>
<svg style="position:absolute;left:22px;top:212px;overflow:visible" width="24" height="24" viewBox="0 0 24 24"><path d="M1 10L7 4L15 12L9 18Z" fill="#e8a030"/><path d="M5 7L13 3L20 11L12 15Z" fill="#e06030"/><path d="M6 2H22V16H6Z" fill="#4a80c8" transform="rotate(10 14 9)"/><rect x="14" y="14" width="10" height="10" rx="1.5" fill="#5a9a55"/><path d="M19.0 16V22M16 19.0H22" stroke="#fff" stroke-width="2"/></svg>
<svg style="position:absolute;left:22px;top:244px;overflow:visible" width="24" height="24" viewBox="0 0 24 24"><path d="M2 10L12 5L22 10V19L12 24L2 19Z" fill="#f0d040" stroke="#a89020"/><path d="M2 10L12 15L22 10M12 15V24" fill="none" stroke="#a89020"/><circle cx="12" cy="8" r="6" fill="#5a8ad0" stroke="#2a5aa0"/><rect x="14" y="14" width="10" height="10" rx="1.5" fill="#e0b820" stroke="#c09a10" stroke-width="0.6"/><path d="M19.0 15.8V22.2M15.8 19.0H22.2M16.76 16.76L21.24 21.24M21.24 16.76L16.76 21.24" stroke="#fff" stroke-width="1.3"/><circle cx="19.0" cy="19.0" r="1.3" fill="#e0b820"/></svg>
<svg style="position:absolute;left:22px;top:276px;overflow:visible" width="24" height="24" viewBox="0 0 24 24"><path d="M2 3L8 19L21 4" fill="none" stroke="#333" stroke-width="1.3"/><circle cx="2.5" cy="3.5" r="2" fill="#fff" stroke="#333"/><circle cx="8" cy="19" r="2" fill="#fff" stroke="#333"/><circle cx="20.5" cy="4" r="2" fill="#fff" stroke="#333"/><rect x="14" y="14" width="10" height="10" rx="1.5" fill="#e0b820" stroke="#c09a10" stroke-width="0.6"/><path d="M19.0 15.8V22.2M15.8 19.0H22.2M16.76 16.76L21.24 21.24M21.24 16.76L16.76 21.24" stroke="#fff" stroke-width="1.3"/><circle cx="19.0" cy="19.0" r="1.3" fill="#e0b820"/></svg>
<svg style="position:absolute;left:22px;top:308px;overflow:visible" width="24" height="24" viewBox="0 0 24 24"><path d="M2 23C4 15 10 5 22 1C20 10 13 19 5 20Z" fill="#c8d8e8" stroke="#5a7a9a"/><path d="M2 23L18 6" stroke="#5a7a9a"/><rect x="14" y="14" width="10" height="10" rx="1.5" fill="#e0b820" stroke="#c09a10" stroke-width="0.6"/><path d="M19.0 15.8V22.2M15.8 19.0H22.2M16.76 16.76L21.24 21.24M21.24 16.76L16.76 21.24" stroke="#fff" stroke-width="1.3"/><circle cx="19.0" cy="19.0" r="1.3" fill="#e0b820"/></svg>
<svg style="position:absolute;left:22px;top:340px;overflow:visible" width="24" height="24" viewBox="0 0 24 24"><rect x="1" y="5" width="20" height="12" rx="2" fill="#5a86c0" stroke="#3a5a8a"/><path d="M4 1V5M8 1V5M12 1V5M16 1V5M4 17V21M8 17V21M12 17V21" stroke="#333"/><rect x="3" y="7" width="16" height="5" fill="#8ab0e0"/><rect x="14" y="14" width="10" height="10" rx="1.5" fill="#e0b820" stroke="#c09a10" stroke-width="0.6"/><path d="M19.0 15.8V22.2M15.8 19.0H22.2M16.76 16.76L21.24 21.24M21.24 16.76L16.76 21.24" stroke="#fff" stroke-width="1.3"/><circle cx="19.0" cy="19.0" r="1.3" fill="#e0b820"/></svg>
<svg style="position:absolute;left:22px;top:372px;overflow:visible" width="24" height="24" viewBox="0 0 24 24"><rect x="1" y="1" width="21" height="21" fill="#5a86c0" stroke="#2a4a7a"/><path d="M1 11.5H22M11.5 1V22" stroke="#cfe0f4" stroke-width="1.2"/><path d="M1 1L11.5 11.5M22 1L11.5 11.5" stroke="#cfe0f4"/><rect x="14" y="14" width="10" height="10" rx="1.5" fill="#e0b820" stroke="#c09a10" stroke-width="0.6"/><path d="M19.0 15.8V22.2M15.8 19.0H22.2M16.76 16.76L21.24 21.24M21.24 16.76L16.76 21.24" stroke="#fff" stroke-width="1.3"/><circle cx="19.0" cy="19.0" r="1.3" fill="#e0b820"/></svg>
<svg style="position:absolute;left:22px;top:404px;overflow:visible" width="24" height="24" viewBox="0 0 24 24"><rect x="1" y="1" width="21" height="21" fill="#b8cce4" stroke="#4a6a9a"/><path d="M3 3L9 18L20 3" fill="none" stroke="#222" stroke-width="1.2"/><circle cx="9" cy="18" r="1.8" fill="#fff" stroke="#222"/><rect x="14" y="14" width="10" height="10" rx="1.5" fill="#e0b820" stroke="#c09a10" stroke-width="0.6"/><path d="M19.0 15.8V22.2M15.8 19.0H22.2M16.76 16.76L21.24 21.24M21.24 16.76L16.76 21.24" stroke="#fff" stroke-width="1.3"/><circle cx="19.0" cy="19.0" r="1.3" fill="#e0b820"/></svg>
<svg style="position:absolute;left:22px;top:452px;overflow:visible" width="24" height="24" viewBox="0 0 24 24"><rect x="2" y="1" width="19" height="22" fill="#4a7ab8" stroke="#2a4a7a"/><rect x="2" y="1" width="4" height="22" fill="#2a4a6a"/><text x="9" y="17" font-family="Liberation Sans" font-size="13" fill="#fff">?</text></svg>
<svg style="position:absolute;left:58px;top:225px;overflow:visible" width="22" height="22" viewBox="0 0 22 22"><g transform="scale(0.9167)"><path d="M2 15L9 9L16 17L9 22Z" fill="#e0a040"/><path d="M2 15L6 12L10 18L6 20Z" fill="#d03030"/><path d="M5 11L9 8L13 14L9 16Z" fill="#4a80c8"/><path d="M8 9L12 6L16 12L12 14Z" fill="#f0d040"/><path d="M13 11L22 2" stroke="#c8903a" stroke-width="2.2"/></g></svg>
<svg style="position:absolute;left:88px;top:225px;overflow:visible" width="20" height="20" viewBox="0 0 20 20"><g transform="scale(0.8333)"><path d="M4 5H12V20H4Z M8 2H16V17" fill="#fafafa" stroke="#666"/><path d="M6 9H10M6 12H10" stroke="#888"/><rect x="14" y="14" width="9" height="9" rx="1.5" fill="#3aa03a"/><path d="M18.5 16V21M16 18.5H21" stroke="#fff" stroke-width="2"/></g></svg>
<svg style="position:absolute;left:111px;top:225px;overflow:visible" width="20" height="20" viewBox="0 0 20 20"><g transform="scale(0.8333)"><path d="M1 11Q10 3 19 11Q10 19 1 11Z" fill="#d8e4f0" stroke="#777"/><circle cx="10" cy="11" r="3.5" fill="#2a4a7a"/><path d="M18 19H24L21 22Z" fill="#444"/></g></svg>
<svg style="position:absolute;left:136px;top:225px;overflow:visible" width="20" height="20" viewBox="0 0 20 20"><g transform="scale(0.8333)"><path d="M2 3H20L13 12V20L9 22V12Z" fill="#4ab0c8" stroke="#2a7a8a"/><path d="M2 3H20" stroke="#f0d040" stroke-width="2"/><path d="M17 19H23L20 22Z" fill="#444"/></g></svg>
<svg style="position:absolute;left:162px;top:225px;overflow:visible" width="20" height="20" viewBox="0 0 20 20"><g transform="scale(0.8333)"><text x="0" y="14" font-family="Liberation Serif" font-size="16" fill="#555">ε</text><path d="M10 12C10 16 11 20 12 22M18 12C18 16 17 20 16 22" fill="none" stroke="#aaa" stroke-width="2"/></g></svg>
<svg style="position:absolute;left:200px;top:225px;overflow:visible" width="20" height="20" viewBox="0 0 20 20"><g transform="scale(0.8333)"><rect x="2" y="5" width="9" height="16" fill="#f0e0a0" stroke="#c8a030"/><rect x="5" y="9" width="4" height="3" fill="#e06020"/><path d="M15 2V17M11 13L15 18L19 13" fill="none" stroke="#3a70c0" stroke-width="2.5"/></g></svg>
<svg style="position:absolute;left:225px;top:225px;overflow:visible" width="20" height="20" viewBox="0 0 20 20"><g transform="scale(0.8333)"><rect x="2" y="5" width="9" height="16" fill="#f0e0a0" stroke="#c8a030"/><rect x="5" y="15" width="4" height="3" fill="#e06020"/><path d="M15 21V4M11 8L15 3L19 8" fill="none" stroke="#3a70c0" stroke-width="2.5"/></g></svg>
<svg style="position:absolute;left:249px;top:225px;overflow:visible" width="20" height="20" viewBox="0 0 20 20"><g transform="scale(0.8333)"><rect x="2" y="2" width="16" height="16" fill="#fff" stroke="#444" stroke-width="1.2"/><rect x="12" y="14" width="10" height="7" rx="1.5" fill="#e03030"/><path d="M14 17.5H20" stroke="#fff" stroke-width="1.5"/></g></svg>
<svg style="position:absolute;left:183px;top:234px;" width="9" height="5" viewBox="0 0 9 5"><path d="M0 0H9L4.5 5Z" fill="#444"/></svg>
<svg style="position:absolute;left:1369px;top:266px;overflow:visible" width="22" height="22" viewBox="0 0 22 22"><g transform="scale(0.9167)"><path d="M2 15L9 9L16 17L9 22Z" fill="#e0a040"/><path d="M2 15L6 12L10 18L6 20Z" fill="#d03030"/><path d="M5 11L9 8L13 14L9 16Z" fill="#4a80c8"/><path d="M8 9L12 6L16 12L12 14Z" fill="#f0d040"/><path d="M13 11L22 2" stroke="#c8903a" stroke-width="2.2"/></g></svg>
<svg style="position:absolute;left:1368px;top:298px;overflow:visible" width="22" height="22" viewBox="0 0 22 22"><g transform="scale(0.9167)"><path d="M6 6H23V18H6L1 12Z" fill="#f0d030" stroke="#b89a10"/><text x="7.5" y="15.5" font-family="Liberation Sans" font-weight="bold" font-size="9" fill="#333">abc</text></g></svg>
<svg style="position:absolute;left:1368px;top:328px;overflow:visible" width="22" height="22" viewBox="0 0 22 22"><g transform="scale(0.9167)"><rect x="1" y="5" width="22" height="14" rx="7" fill="#fff" stroke="#333"/><text x="3.5" y="15.5" font-family="Liberation Sans" font-weight="bold" font-size="9" fill="#333">abc</text></g></svg>
<svg style="position:absolute;left:1368px;top:361px;overflow:visible" width="22" height="22" viewBox="0 0 22 22"><g transform="scale(0.9167)"><path d="M12 1L23 6L12 11L1 6Z" fill="#e84040"/><path d="M1 6L12 11V23L1 17Z" fill="#e8e040"/><path d="M23 6L12 11V23L23 17Z" fill="#60c040"/></g></svg>
<svg style="position:absolute;left:1368px;top:394px;overflow:visible" width="22" height="22" viewBox="0 0 22 22"><g transform="scale(0.9167)"><path d="M8 1L15 4L8 7L1 4Z" fill="#e84040"/><path d="M1 4L8 7V15L1 12Z" fill="#e8e040"/><path d="M15 4L8 7V15L15 12Z" fill="#60c040"/><rect x="10" y="12" width="4" height="11" fill="#e8e040"/><rect x="15" y="15" width="4" height="8" fill="#60c040"/><rect x="19" y="18" width="4" height="5" fill="#e84040"/></g></svg>
<svg style="position:absolute;left:1368px;top:425px;overflow:visible" width="22" height="22" viewBox="0 0 22 22"><g transform="scale(0.9167)"><path d="M1 16L5 5L20 3L23 13L9 17Z" fill="#c0c0c0" stroke="#eee"/><path d="M5 8L18 6M3 12L21 10M9 5L11 16M15 4L17 15" stroke="#e8e8e8"/></g></svg>
<svg style="position:absolute;left:1368px;top:457px;overflow:visible" width="22" height="22" viewBox="0 0 22 22"><g transform="scale(0.9167)"><rect x="8" y="1" width="8" height="6" fill="#e84040"/><path d="M12 7V11M5 11H19M5 11V15M19 11V15M12 11V15" stroke="#c83030" stroke-width="1.5"/><rect x="1" y="15" width="8" height="7" fill="#f0d040"/><rect x="15" y="15" width="8" height="7" fill="#6a9ae0"/><rect x="9" y="15" width="6" height="7" fill="#f0b040"/></g></svg>
<svg style="position:absolute;left:1368px;top:489px;overflow:visible" width="22" height="22" viewBox="0 0 22 22"><g transform="scale(0.9167)"><path d="M6 10C6 5 10 3 15 5L14 2L20 6L14 10L15 7C11 6 8 7 8 10Z" fill="#5ab05a"/><path d="M18 14C18 19 14 21 9 19L10 22L4 18L10 14L9 17C13 18 16 17 16 14Z" fill="#f08030"/></g></svg>
<svg style="position:absolute;left:468px;top:592px;" width="3" height="18" viewBox="0 0 3 18"><circle cx="1.2" cy="1.5" r="0.7" fill="#999"/><circle cx="1.2" cy="4.5" r="0.7" fill="#999"/><circle cx="1.2" cy="7.5" r="0.7" fill="#999"/><circle cx="1.2" cy="10.5" r="0.7" fill="#999"/><circle cx="1.2" cy="13.5" r="0.7" fill="#999"/><circle cx="1.2" cy="16.5" r="0.7" fill="#999"/></svg>
<svg style="position:absolute;left:1357px;top:592px;" width="3" height="18" viewBox="0 0 3 18"><circle cx="1.2" cy="1.5" r="0.7" fill="#999"/><circle cx="1.2" cy="4.5" r="0.7" fill="#999"/><circle cx="1.2" cy="7.5" r="0.7" fill="#999"/><circle cx="1.2" cy="10.5" r="0.7" fill="#999"/><circle cx="1.2" cy="13.5" r="0.7" fill="#999"/><circle cx="1.2" cy="16.5" r="0.7" fill="#999"/></svg>
</div></body></html>
